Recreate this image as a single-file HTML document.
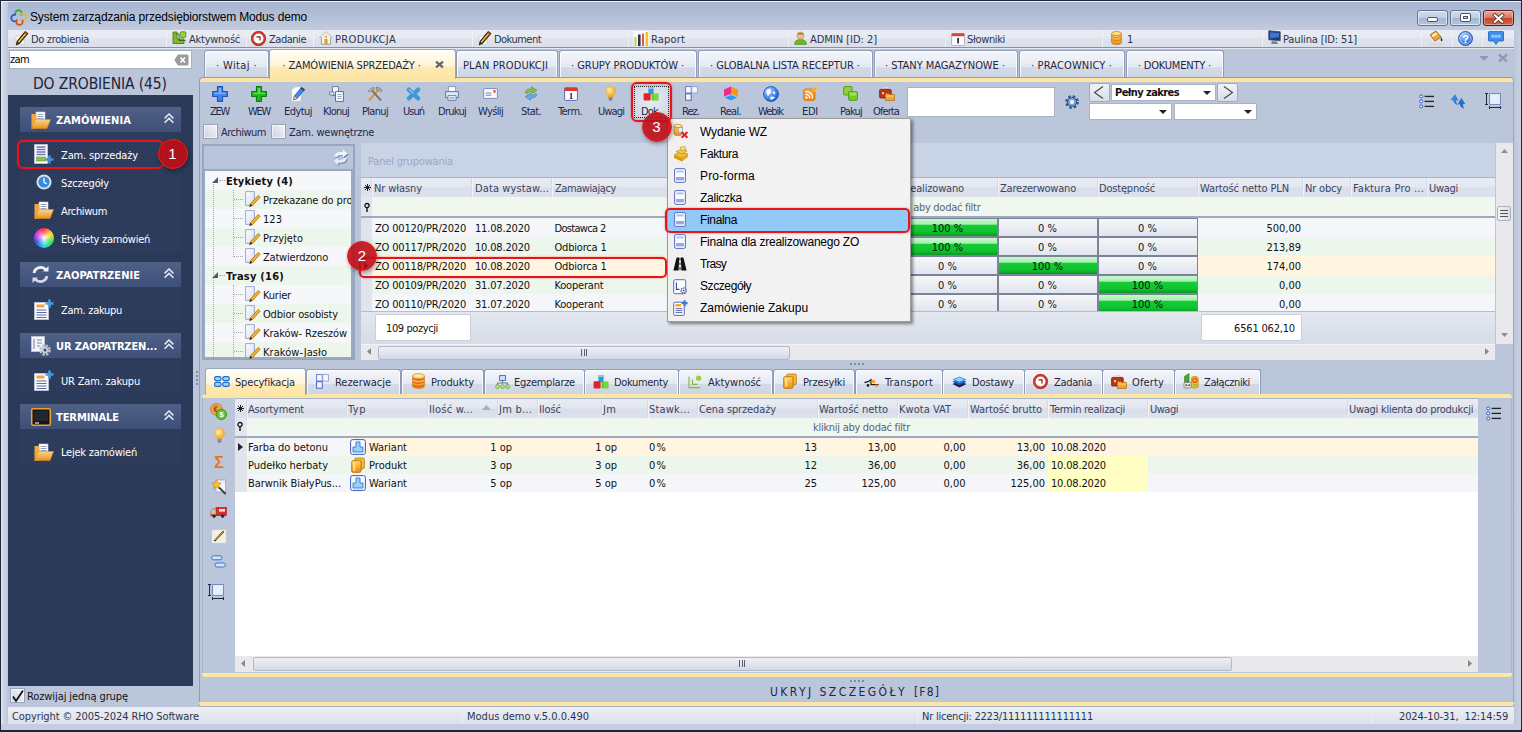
<!DOCTYPE html>
<html><head><meta charset="utf-8"><title>Modus demo</title>
<style>
*{box-sizing:border-box;margin:0;padding:0}
html,body{width:1522px;height:732px;overflow:hidden}
body{position:relative;background:#bbc6db;font-family:"DejaVu Sans Condensed","Liberation Sans",sans-serif;font-size:11px;color:#1b1b1b}
.seg{font-family:"Liberation Sans",sans-serif}
.a{position:absolute}
.t{position:absolute;white-space:nowrap;line-height:14px}
.c{text-align:center}
.r{text-align:right}
svg{position:absolute;overflow:visible}
.tab{position:absolute;top:50px;height:27px;border:1px solid #8f9cb8;border-bottom:none;border-radius:3px 3px 0 0;background:linear-gradient(#f4f6fa 0,#e4e8f1 61%,#d3dae7 64%,#cdd5e4 100%);box-shadow:inset 1px 1px 0 rgba(255,255,255,.8),inset -1px 0 0 rgba(255,255,255,.8)}
.btab{position:absolute;top:368.5px;height:25px;border:1px solid #8f9cb8;border-bottom:none;border-radius:3px 3px 0 0;background:linear-gradient(#f4f6fa 0,#e4e8f1 58%,#d3dae7 60%,#cdd5e4 100%);box-shadow:inset 1px 1px 0 rgba(255,255,255,.8),inset -1px 0 0 rgba(255,255,255,.8)}
.hd{position:absolute;background:linear-gradient(#e9ecf3 0,#e3e7f0 48%,#d9deea 52%,#dde2ec 100%)}
.sep{position:absolute;width:2px;background:linear-gradient(90deg,#d4d9e5 50%,#f1f3f7 50%)}
.pc{position:absolute;height:19px;border:1px solid #7b8398;background:linear-gradient(#f6f7fa,#e0e4ed)}
.pg{position:absolute;height:19px;border:1px solid #7b8398;background:linear-gradient(#c9f7ce 0,#a8f0b2 30%,#14cc34 38%,#0fc42e 75%,#0a9a22 100%)}
.cb{position:absolute;width:14.5px;height:14.5px;border:1px solid #9aa3b5;background:linear-gradient(45deg,#cdd2de,#f4f5f8);box-shadow:inset 0 0 0 1px rgba(255,255,255,.6)}
.combo{position:absolute;background:#fff;border:1px solid #a9b2c4}
.arr{position:absolute;width:0;height:0;border-left:4px solid transparent;border-right:4px solid transparent;border-top:4px solid #222}
.badge{position:absolute;width:30px;height:30px;border-radius:15px;background:rgba(190,14,22,.9);border:1.5px solid #f51818;box-shadow:1px 2px 4px rgba(0,0,0,.35);color:#fff;font-family:"Liberation Sans",sans-serif;font-size:15px;line-height:27px;text-align:center}
.rr{position:absolute;border:2px solid #e8141c;border-radius:5px;box-shadow:0 0 2px rgba(232,20,28,.6)}
</style></head><body>
<div class="a " style="left:0px;top:0px;width:1522px;height:732px;border:1px solid #1d2636;border-bottom:2px solid #1d2636;background:linear-gradient(#a6b4d0 0,#aebbd5 10px,#c2cce0 29px,#b7c3da 30px,#b7c3da 100%)"></div>
<div class="a " style="left:1px;top:1px;width:1520px;height:1px;background:#f2f5f9;"></div>
<div class="a " style="left:1px;top:2px;width:7px;height:722px;background:linear-gradient(90deg,#eef1f6 0,#d2d9e7 1.5px,#bdc8dc 7px)"></div>
<div class="a " style="left:1514px;top:30px;width:7px;height:694px;background:linear-gradient(90deg,#bcc7dc,#c9d1e3)"></div>
<div class="a " style="left:8px;top:48px;width:1505px;height:660px;background:#bbc6db;"></div>
<div class="t seg" style="top: 10px; font-size: 12px; color: rgb(0, 0, 0); left: 30px; letter-spacing: -0.15px;">System zarządzania przedsiębiorstwem Modus demo</div>
<div class="a " style="left:8px;top:30px;width:1506px;height:18px;background:linear-gradient(#e9ecf3 0,#e6e9f0 48%,#dde2ec 54%,#dbe0ea 100%);border-bottom:1px solid #8c8f98"></div>
<div class="a " style="left:8px;top:48px;width:1506px;height:1px;background:#e4e8f0;"></div>
<div class="a " style="left:166px;top:31px;width:1px;height:16px;background:#eef1f6;"></div>
<div class="a " style="left:246px;top:31px;width:1px;height:16px;background:#eef1f6;"></div>
<div class="a " style="left:313px;top:31px;width:1px;height:16px;background:#eef1f6;"></div>
<div class="a " style="left:472px;top:31px;width:1px;height:16px;background:#eef1f6;"></div>
<div class="a " style="left:628px;top:31px;width:1px;height:16px;background:#eef1f6;"></div>
<div class="a " style="left:788px;top:31px;width:1px;height:16px;background:#eef1f6;"></div>
<div class="a " style="left:945px;top:31px;width:1px;height:16px;background:#eef1f6;"></div>
<div class="a " style="left:1102px;top:31px;width:1px;height:16px;background:#eef1f6;"></div>
<div class="a " style="left:1262px;top:31px;width:1px;height:16px;background:#eef1f6;"></div>
<div class="a " style="left:1421px;top:31px;width:1px;height:16px;background:#eef1f6;"></div>
<div class="a " style="left:1452px;top:31px;width:1px;height:16px;background:#eef1f6;"></div>
<div class="a " style="left:1482px;top:31px;width:1px;height:16px;background:#eef1f6;"></div>
<div class="t " style="top: 32.7px; color: rgb(44, 53, 80); left: 31px; letter-spacing: -0.34px;">Do zrobienia</div>
<div class="t " style="top: 32.7px; color: rgb(44, 53, 80); left: 189px; letter-spacing: -0.25px;">Aktywność</div>
<div class="t " style="top: 32.7px; color: rgb(44, 53, 80); left: 269px; letter-spacing: -0.47px;">Zadanie</div>
<div class="t " style="top: 32.7px; color: rgb(44, 53, 80); left: 335px; letter-spacing: 0.36px;">PRODUKCJA</div>
<div class="t " style="top: 32.7px; color: rgb(44, 53, 80); left: 494px; letter-spacing: -0.53px;">Dokument</div>
<div class="t " style="top: 32.7px; color: rgb(44, 53, 80); left: 651px; letter-spacing: 0.17px;">Raport</div>
<div class="t " style="top: 32.7px; color: rgb(44, 53, 80); left: 810px; letter-spacing: -0.03px;">ADMIN [ID: 2]</div>
<div class="t " style="top: 32.7px; color: rgb(44, 53, 80); left: 967px; letter-spacing: -0.34px;">Słowniki</div>
<div class="t " style="top:32.7px;color:#2c3550;left:1127px;">1</div>
<div class="t " style="top: 32.7px; color: rgb(44, 53, 80); left: 1283px; letter-spacing: -0.13px;">Paulina [ID: 51]</div>
<div class="a " style="left:1417px;top:10px;width:31px;height:16px;border:1px solid #5f7591;border-radius:3px;background:linear-gradient(#d0dcec 0,#c0cfe4 48%,#a2b7d3 52%,#b4c6de 100%);box-shadow:inset 0 0 0 1px rgba(255,255,255,.55)"></div>
<div class="a " style="left:1450px;top:10px;width:31px;height:16px;border:1px solid #5f7591;border-radius:3px;background:linear-gradient(#d0dcec 0,#c0cfe4 48%,#a2b7d3 52%,#b4c6de 100%);box-shadow:inset 0 0 0 1px rgba(255,255,255,.55)"></div>
<div class="a " style="left:1483px;top:10px;width:31px;height:16px;border:1px solid #5a1a1c;border-radius:3px;background:linear-gradient(#eaa899 0,#dc7b66 46%,#c8432b 52%,#d4674f 100%);box-shadow:inset 0 0 0 1px rgba(255,255,255,.35)"></div>
<div class="a " style="left:1427px;top:17px;width:11px;height:5px;background:#fff;border:1px solid #4a5468;border-radius:2px"></div>
<div class="a " style="left:1460px;top:13px;width:11px;height:9px;background:#fff;border:1px solid #4a5468;border-radius:2px"></div>
<div class="a " style="left:1463px;top:16px;width:5px;height:3px;background:#c8d4e6;border:1px solid #4a5468"></div>
<svg style="left:1493px;top:13.5px" width="11" height="9" viewBox="0 0 11 9"><path d="M1.8 1.2 L9.2 7.8 M9.2 1.2 L1.8 7.8" stroke="#4a3030" stroke-width="3.6" stroke-linecap="square"></path><path d="M1.8 1.2 L9.2 7.8 M9.2 1.2 L1.8 7.8" stroke="#fff" stroke-width="2.1" stroke-linecap="square"></path></svg>
<div class="a " style="left:1px;top:724px;width:1520px;height:6px;background:#c5cee0;"></div>
<div class="a " style="left:8px;top:707px;width:1506px;height:17px;background:linear-gradient(#eceff4,#dce0ea)"></div>
<div class="t " style="top: 709.7px; color: rgb(44, 53, 80); left: 12px; letter-spacing: -0.1px;">Copyright © 2005-2024 RHO Software</div>
<div class="t " style="top: 709.7px; color: rgb(44, 53, 80); left: 467px; letter-spacing: 0px;">Modus demo v.5.0.0.490</div>
<div class="t " style="top: 709.7px; color: rgb(44, 53, 80); left: 922px; letter-spacing: -0.22px;">Nr licencji: 2223/111111111111111</div>
<div class="t " style="top: 709.7px; color: rgb(44, 53, 80); left: 1399px; white-space: pre; letter-spacing: -0.11px;">2024-10-31,  12:14:59</div>
<div class="a " style="left:1372px;top:708px;width:1px;height:16px;background:#eceff5;"></div>
<div class="a " style="left:917px;top:708px;width:1px;height:16px;background:#eceff5;"></div>
<div class="a " style="left:462px;top:708px;width:1px;height:16px;background:#eceff5;"></div>
<div class="a " style="left:8px;top:95px;width:185px;height:591px;background:#2b3a58;"></div>
<svg style="left:0;top:0" width="0" height="0"><defs><pattern id="dots" width="4" height="4" patternUnits="userSpaceOnUse"><rect width="4" height="4" fill="#2b3a58"></rect><rect x="0" y="0" width="1" height="1" fill="#394868"></rect><rect x="2" y="2" width="1" height="1" fill="#394868"></rect></pattern></defs></svg>
<svg style="left:20px;top:132px" width="161" height="120"><rect width="161" height="120" fill="url(#dots)"></rect></svg>
<svg style="left:20px;top:287px" width="161" height="36"><rect width="161" height="36" fill="url(#dots)"></rect></svg>
<svg style="left:20px;top:358px" width="161" height="36"><rect width="161" height="36" fill="url(#dots)"></rect></svg>
<svg style="left:20px;top:429px" width="161" height="36"><rect width="161" height="36" fill="url(#dots)"></rect></svg>
<div class="a " style="left:9px;top:50px;width:183px;height:19px;background:#fff;border:1px solid #a8b1c4"></div>
<div class="t " style="top: 52.7px; color: rgb(0, 0, 0); left: 10px; letter-spacing: -0.64px;">zam</div>
<svg style="left:174px;top:54px" width="15" height="12" viewBox="0 0 15 12"><path d="M4 0.5 H13 Q14.5 0.5 14.5 2 V10 Q14.5 11.5 13 11.5 H4 L0.3 6 Z" fill="#9a9a9a"></path><path d="M6.5 3.5 L11 8.5 M11 3.5 L6.5 8.5" stroke="#fff" stroke-width="1.6"></path></svg>
<div class="t " style="top: 74.1px; font-size: 15.5px; color: rgb(28, 36, 57); left: 33px; line-height: 20px; letter-spacing: -0.12px;">DO ZROBIENIA (45)</div>
<div class="a " style="left:20px;top:107px;width:161px;height:25px;background:linear-gradient(#4f6185,#3e4f79)"></div>
<div class="a " style="left:20px;top:262px;width:161px;height:25px;background:linear-gradient(#4f6185,#3e4f79)"></div>
<div class="a " style="left:20px;top:333px;width:161px;height:25px;background:linear-gradient(#4f6185,#3e4f79)"></div>
<div class="a " style="left:20px;top:404px;width:161px;height:25px;background:linear-gradient(#4f6185,#3e4f79)"></div>
<div class="t " style="top: 113.7px; color: rgb(255, 255, 255); font-weight: bold; left: 56px; letter-spacing: 0.09px;">ZAMÓWIENIA</div>
<div class="t " style="top: 268.7px; color: rgb(255, 255, 255); font-weight: bold; left: 56px; letter-spacing: 0.06px;">ZAOPATRZENIE</div>
<div class="t " style="top: 339.7px; color: rgb(255, 255, 255); font-weight: bold; left: 56px; letter-spacing: -0.14px;">UR ZAOPATRZEN...</div>
<div class="t " style="top: 410.7px; color: rgb(255, 255, 255); font-weight: bold; left: 56px; letter-spacing: -0.08px;">TERMINALE</div>
<svg style="left:163.5px;top:113px" width="10" height="11" viewBox="0 0 10 11"><path d="M0.6 5.4 L5 1 L9.4 5.4 M0.6 9.8 L5 5.4 L9.4 9.8" fill="none" stroke="#e6eaf2" stroke-width="1.5"></path></svg>
<svg style="left:163.5px;top:268px" width="10" height="11" viewBox="0 0 10 11"><path d="M0.6 5.4 L5 1 L9.4 5.4 M0.6 9.8 L5 5.4 L9.4 9.8" fill="none" stroke="#e6eaf2" stroke-width="1.5"></path></svg>
<svg style="left:163.5px;top:339px" width="10" height="11" viewBox="0 0 10 11"><path d="M0.6 5.4 L5 1 L9.4 5.4 M0.6 9.8 L5 5.4 L9.4 9.8" fill="none" stroke="#e6eaf2" stroke-width="1.5"></path></svg>
<svg style="left:163.5px;top:410px" width="10" height="11" viewBox="0 0 10 11"><path d="M0.6 5.4 L5 1 L9.4 5.4 M0.6 9.8 L5 5.4 L9.4 9.8" fill="none" stroke="#e6eaf2" stroke-width="1.5"></path></svg>
<div class="t " style="top: 148.7px; color: rgb(255, 255, 255); left: 61px; letter-spacing: -0.14px;">Zam. sprzedaży</div>
<div class="t " style="top: 176.7px; color: rgb(255, 255, 255); left: 61px; letter-spacing: -0.14px;">Szczegóły</div>
<div class="t " style="top: 204.7px; color: rgb(255, 255, 255); left: 61px; letter-spacing: -0.38px;">Archiwum</div>
<div class="t " style="top: 232.7px; color: rgb(255, 255, 255); left: 61px; letter-spacing: -0.27px;">Etykiety zamówień</div>
<div class="t " style="top: 303.7px; color: rgb(255, 255, 255); left: 61px; letter-spacing: -0.3px;">Zam. zakupu</div>
<div class="t " style="top: 374.7px; color: rgb(255, 255, 255); left: 61px; letter-spacing: -0.18px;">UR Zam. zakupu</div>
<div class="t " style="top: 445.7px; color: rgb(255, 255, 255); left: 61px; letter-spacing: -0.24px;">Lejek zamówień</div>
<div class="a " style="left:10px;top:688px;width:15px;height:15px;border:1px solid #9aa3b5;background:linear-gradient(45deg,#cdd2de,#f4f5f8);box-shadow:inset 0 0 0 1px rgba(255,255,255,.6)"></div>
<svg style="left:12px;top:689.5px" width="12" height="12" viewBox="0 0 12 12"><path d="M1 6.5 L4 11 L11 0.5" fill="none" stroke="#111" stroke-width="1.8"></path></svg>
<div class="t " style="top: 689.7px; color: rgb(17, 17, 17); left: 27px; letter-spacing: -0.09px;">Rozwijaj jedną grupę</div>
<div class="a " style="left:199px;top:77px;width:1315px;height:630px;border-radius:4px 4px 3px 3px;background:#fde5a4;border-top:1px solid #8f9cb8;border-left:1px solid #8f9cb8;border-right:1px solid #9aa7c2"></div>
<div class="a " style="left:199px;top:82px;width:1315px;height:620px;background:#bbc6db;border-left:1px solid #8f9cb8;border-right:1px solid #9aa7c2"></div>
<div class="a " style="left:199px;top:702px;width:1315px;height:4px;background:#fde5a4;border-radius:0 0 4px 4px"></div>
<div class="a " style="left:201px;top:706px;width:1311px;height:1px;background:#a5afc4;"></div>
<div class="tab" style="left:203.5px;width:65.5px"></div>
<div class="t " style="top: 58.7px; color: rgb(30, 39, 64); left: 216px; letter-spacing: 0.38px;">· Witaj ·</div>
<div class="tab" style="left:455.5px;width:102.5px"></div>
<div class="t " style="top: 58.7px; color: rgb(30, 39, 64); left: 463px; letter-spacing: 0.13px;">PLAN PRODUKCJI</div>
<div class="tab" style="left:559px;width:138px"></div>
<div class="t " style="top: 58.7px; color: rgb(30, 39, 64); left: 571px; letter-spacing: -0.05px;">· GRUPY PRODUKTÓW ·</div>
<div class="tab" style="left:698px;width:175px"></div>
<div class="t " style="top: 58.7px; color: rgb(30, 39, 64); left: 710px; letter-spacing: -0.07px;">· GLOBALNA LISTA RECEPTUR ·</div>
<div class="tab" style="left:874px;width:144px"></div>
<div class="t " style="top: 58.7px; color: rgb(30, 39, 64); left: 885px; letter-spacing: -0.05px;">· STANY MAGAZYNOWE ·</div>
<div class="tab" style="left:1019px;width:106px"></div>
<div class="t " style="top: 58.7px; color: rgb(30, 39, 64); left: 1031px; letter-spacing: 0.14px;">· PRACOWNICY ·</div>
<div class="tab" style="left:1126px;width:98px"></div>
<div class="t " style="top: 58.7px; color: rgb(30, 39, 64); left: 1138px; letter-spacing: -0.21px;">· DOKUMENTY ·</div>
<div class="a " style="left:269px;top:49px;width:186.5px;height:30px;border:1px solid #9aa6bd;border-bottom:none;border-radius:3px 3px 0 0;background:linear-gradient(#fffdf6 0,#fff4d6 55%,#fde9b4 60%,#fde5a4 100%)"></div>
<div class="t " style="top: 58.7px; color: rgb(30, 39, 64); left: 282.5px; letter-spacing: -0.1px;">· ZAMÓWIENIA SPRZEDAŻY ·</div>
<svg style="left:435px;top:61px" width="9" height="7" viewBox="0 0 9 7"><path d="M1 0.6 L8 6.4 M8 0.6 L1 6.4" stroke="#63676f" stroke-width="2.3"></path></svg>
<svg style="left:1479px;top:56px" width="10" height="5" viewBox="0 0 10 5"><path d="M0 0 H10 L5 5 Z" fill="#8f9bb5"></path></svg>
<svg style="left:1498px;top:54px" width="10" height="8" viewBox="0 0 10 8"><path d="M1 0.5 L9 7.5 M9 0.5 L1 7.5" stroke="#8f9bb5" stroke-width="2.4"></path></svg>
<div class="a " style="left:634px;top:85.5px;width:34.5px;height:32.5px;border:1px dotted #222;background:radial-gradient(ellipse at 50% 45%,#e8ebf1,#cfd5e2)"></div>
<div class="t " style="top: 104.7px; color: rgb(30, 40, 72); left: 210px; letter-spacing: -1.28px;">ZEW</div>
<div class="t " style="top: 104.7px; color: rgb(30, 40, 72); left: 248px; letter-spacing: -1.28px;">WEW</div>
<div class="t " style="top: 104.7px; color: rgb(30, 40, 72); left: 284px; letter-spacing: -0.55px;">Edytuj</div>
<div class="t " style="top: 104.7px; color: rgb(30, 40, 72); left: 323px; letter-spacing: -0.77px;">Klonuj</div>
<div class="t " style="top: 104.7px; color: rgb(30, 40, 72); left: 362px; letter-spacing: -0.68px;">Planuj</div>
<div class="t " style="top: 104.7px; color: rgb(30, 40, 72); left: 403px; letter-spacing: -0.99px;">Usuń</div>
<div class="t " style="top: 104.7px; color: rgb(30, 40, 72); left: 438px; letter-spacing: -0.73px;">Drukuj</div>
<div class="t " style="top: 104.7px; color: rgb(30, 40, 72); left: 478px; letter-spacing: -0.64px;">Wyślij</div>
<div class="t " style="top: 104.7px; color: rgb(30, 40, 72); left: 521px; letter-spacing: -0.65px;">Stat.</div>
<div class="t " style="top: 104.7px; color: rgb(30, 40, 72); left: 558px; letter-spacing: -0.58px;">Term.</div>
<div class="t " style="top: 104.7px; color: rgb(30, 40, 72); left: 598px; letter-spacing: -0.89px;">Uwagi</div>
<div class="t " style="top: 104.7px; color: rgb(30, 40, 72); left: 641px; letter-spacing: -0.89px;">Dok.</div>
<div class="t " style="top: 104.7px; color: rgb(30, 40, 72); left: 682px; letter-spacing: -0.95px;">Rez.</div>
<div class="t " style="top: 104.7px; color: rgb(30, 40, 72); left: 720px; letter-spacing: -0.69px;">Real.</div>
<div class="t " style="top: 104.7px; color: rgb(30, 40, 72); left: 758px; letter-spacing: -1px;">Webik</div>
<div class="t " style="top: 104.7px; color: rgb(30, 40, 72); left: 802px; letter-spacing: -0.27px;">EDI</div>
<div class="t " style="top: 104.7px; color: rgb(30, 40, 72); left: 840px; letter-spacing: -0.79px;">Pakuj</div>
<div class="t " style="top: 104.7px; color: rgb(30, 40, 72); left: 873px; letter-spacing: -0.9px;">Oferta</div>
<div class="a " style="left:907px;top:87px;width:148px;height:30px;background:#fff;border:1px solid #a9b2c4"></div>
<div class="a " style="left:1089px;top:83px;width:21px;height:19px;border:1px solid #a1a9ba;border-radius:2px;background:linear-gradient(#f1f3f7,#d9dde7)"></div>
<svg style="left:1093px;top:86px" width="12" height="13" viewBox="0 0 12 13"><path d="M10 0.5 L1.5 6.5 L10 12.5" fill="none" stroke="#444" stroke-width="1.1"></path></svg>
<div class="a " style="left:1217px;top:83px;width:21px;height:19px;border:1px solid #a1a9ba;border-radius:2px;background:linear-gradient(#f1f3f7,#d9dde7)"></div>
<svg style="left:1222px;top:86px" width="12" height="13" viewBox="0 0 12 13"><path d="M2 0.5 L10.5 6.5 L2 12.5" fill="none" stroke="#444" stroke-width="1.1"></path></svg>
<div class="combo" style="left:1111px;top:84px;width:105px;height:17px"></div>
<div class="t " style="top: 85.7px; color: rgb(17, 17, 17); font-weight: bold; left: 1115px; letter-spacing: -0.59px;">Pełny zakres</div>
<div class="arr" style="left:1203px;top:91px"></div>
<div class="combo" style="left:1089px;top:103px;width:83px;height:17px"></div>
<div class="arr" style="left:1159px;top:110px"></div>
<div class="combo" style="left:1174px;top:103px;width:83px;height:17px"></div>
<div class="arr" style="left:1244px;top:110px"></div>
<div class="cb" style="left:203px;top:124px"></div>
<div class="t " style="top: 125.7px; color: rgb(30, 40, 72); left: 221px; letter-spacing: -0.51px;">Archiwum</div>
<div class="cb" style="left:271px;top:124px"></div>
<div class="t " style="top: 125.7px; color: rgb(30, 40, 72); left: 289px; letter-spacing: -0.26px;">Zam. wewnętrzne</div>
<div class="a " style="left:202px;top:144px;width:153px;height:216px;background:#9ba8c1;border:1px solid #96a3bd"></div>
<div class="a " style="left:204px;top:146px;width:149px;height:23px;background:#b8c4da;"></div>
<div class="a" style="left:205px;top:171px;width:146px;height:186px;overflow:hidden;background:#f6f7fa">
<div class="a" style="left:0;top:19px;width:147px;height:19px;background:#edf6ec"></div>
<div class="a" style="left:0;top:57px;width:147px;height:19px;background:#edf6ec"></div>
<div class="a" style="left:0;top:95px;width:147px;height:19px;background:#edf6ec"></div>
<div class="a" style="left:0;top:133px;width:147px;height:19px;background:#edf6ec"></div>
<div class="a" style="left:0;top:171px;width:147px;height:19px;background:#edf6ec"></div>
</div>
<div class="a" style="left:205px;top:171px;width:146px;height:186px;overflow:hidden">
<div class="t " style="top: 3.7px; color: rgb(17, 17, 17); font-weight: bold; left: 21px; letter-spacing: 0.15px;">Etykiety (4)</div>
<svg style="left:6.5px;top:6px" width="6" height="6" viewBox="0 0 6 6"><path d="M6 0 V6 H0 Z" fill="#50586a"></path></svg>
<div class="t " style="top: 22.7px; color: rgb(17, 17, 17); left: 58px; letter-spacing: -0.1px;">Przekazane do produkcji</div>
<div class="t " style="top: 41.7px; color: rgb(17, 17, 17); left: 58px; letter-spacing: 0.04px;">123</div>
<div class="t " style="top: 60.7px; color: rgb(17, 17, 17); left: 58px; letter-spacing: 0.04px;">Przyjęto</div>
<div class="t " style="top: 79.7px; color: rgb(17, 17, 17); left: 58px; letter-spacing: -0.2px;">Zatwierdzono</div>
<div class="t " style="top: 98.7px; color: rgb(17, 17, 17); font-weight: bold; left: 21px; letter-spacing: 0.23px;">Trasy (16)</div>
<svg style="left:6.5px;top:101px" width="6" height="6" viewBox="0 0 6 6"><path d="M6 0 V6 H0 Z" fill="#50586a"></path></svg>
<div class="t " style="top: 117.7px; color: rgb(17, 17, 17); left: 58px; letter-spacing: -0.2px;">Kurier</div>
<div class="t " style="top: 136.7px; color: rgb(17, 17, 17); left: 58px; letter-spacing: -0.17px;">Odbior osobisty</div>
<div class="t " style="top: 155.7px; color: rgb(17, 17, 17); left: 58px; letter-spacing: -0.1px;">Kraków- Rzeszów</div>
<div class="t " style="top: 174.7px; color: rgb(17, 17, 17); left: 58px; letter-spacing: 0.06px;">Kraków-Jasło</div>
</div>
<div class="a " style="left:361px;top:143px;width:1134px;height:35px;background:#c9d3e6;"></div>
<div class="t " style="top: 154.7px; color: rgb(156, 167, 191); left: 368px; letter-spacing: -0.19px;">Panel grupowania</div>
<div class="a " style="left:361px;top:177px;width:1134px;height:1px;background:#aab4c8;"></div>
<div class="hd" style="left:361px;top:178px;width:1134px;height:19px"></div>
<div class="sep" style="left:371px;top:178px;height:19px"></div>
<div class="t " style="top: 181.7px; color: rgb(58, 68, 96); left: 374px; letter-spacing: -0.1px;">Nr własny</div>
<div class="sep" style="left:471px;top:178px;height:19px"></div>
<div class="t " style="top: 181.7px; color: rgb(58, 68, 96); left: 475px; letter-spacing: 0.12px;">Data wystaw...</div>
<div class="sep" style="left:551px;top:178px;height:19px"></div>
<div class="t " style="top: 181.7px; color: rgb(58, 68, 96); left: 555px; letter-spacing: -0.42px;">Zamawiający</div>
<div class="sep" style="left:897px;top:178px;height:19px"></div>
<div class="t " style="top: 181.7px; color: rgb(58, 68, 96); left: 900px; letter-spacing: -0.17px;">Zrealizowano</div>
<div class="sep" style="left:997px;top:178px;height:19px"></div>
<div class="t " style="top: 181.7px; color: rgb(58, 68, 96); left: 1000px; letter-spacing: -0.21px;">Zarezerwowano</div>
<div class="sep" style="left:1097px;top:178px;height:19px"></div>
<div class="t " style="top: 181.7px; color: rgb(58, 68, 96); left: 1099px; letter-spacing: -0.2px;">Dostępność</div>
<div class="sep" style="left:1197px;top:178px;height:19px"></div>
<div class="t " style="top: 181.7px; color: rgb(58, 68, 96); left: 1200px; letter-spacing: -0.12px;">Wartość netto PLN</div>
<div class="sep" style="left:1302px;top:178px;height:19px"></div>
<div class="t " style="top: 181.7px; color: rgb(58, 68, 96); left: 1305px; letter-spacing: -0.18px;">Nr obcy</div>
<div class="sep" style="left:1350px;top:178px;height:19px"></div>
<div class="t " style="top: 181.7px; color: rgb(58, 68, 96); left: 1353px; letter-spacing: 0.19px;">Faktura Pro ...</div>
<div class="sep" style="left:1426px;top:178px;height:19px"></div>
<div class="t " style="top: 181.7px; color: rgb(58, 68, 96); left: 1429px; letter-spacing: -0.29px;">Uwagi</div>
<svg style="left:364px;top:184px" width="7" height="7" viewBox="0 0 7 7"><path d="M3.5 0 V7 M0 3.5 H7 M1 1 L6 6 M6 1 L1 6" stroke="#222" stroke-width="1"></path></svg>
<div class="a " style="left:361px;top:197px;width:1134px;height:19px;background:#eff7ee;"></div>
<div class="a " style="left:361px;top:197px;width:11px;height:19px;background:#e3e6ee;"></div>
<svg style="left:364px;top:203px" width="6" height="9" viewBox="0 0 6 9"><circle cx="3" cy="2.6" r="2.1" fill="none" stroke="#111" stroke-width="1.3"></circle><path d="M3 4.5 V9" stroke="#111" stroke-width="1.4"></path></svg>
<div class="t " style="top: 200.7px; color: rgb(90, 99, 120); left: 782px; width: 300px; text-align: center; letter-spacing: -0.28px;">kliknij aby dodać filtr</div>
<div class="a " style="left:361px;top:216px;width:1134px;height:2px;background:#a0a9c0;"></div>
<div class="a " style="left:361px;top:218px;width:1134px;height:19px;background:#f5f6fa;"></div>
<div class="a " style="left:361px;top:218px;width:11px;height:19px;background:#e1e4ec;"></div>
<div class="t " style="top: 221.7px; color: rgb(17, 17, 17); left: 375px; letter-spacing: -0.18px;">ZO 00120/PR/2020</div>
<div class="t " style="top: 221.7px; color: rgb(17, 17, 17); left: 475px; letter-spacing: -0.17px;">11.08.2020</div>
<div class="t " style="top: 221.7px; color: rgb(17, 17, 17); left: 554.5px; letter-spacing: -0.68px;">Dostawca 2</div>
<div class="pg" style="left:898px;top:218px;width:100px;height:19px"></div>
<div class="t " style="top:221.7px;color:#111;left:797.5px;width:300px;text-align:center;">100 %</div>
<div class="pc" style="left:998px;top:218px;width:100px;height:19px"></div>
<div class="t " style="top:221.7px;color:#111;left:897.5px;width:300px;text-align:center;">0 %</div>
<div class="pc" style="left:1098px;top:218px;width:100px;height:19px"></div>
<div class="t " style="top:221.7px;color:#111;left:997.5px;width:300px;text-align:center;">0 %</div>
<div class="t " style="top:221.7px;color:#111;right:221px;">500,00</div>
<div class="a " style="left:361px;top:237px;width:1134px;height:19px;background:#edf6ec;"></div>
<div class="a " style="left:361px;top:237px;width:11px;height:19px;background:#e1e4ec;"></div>
<div class="t " style="top: 240.7px; color: rgb(17, 17, 17); left: 375px; letter-spacing: -0.18px;">ZO 00117/PR/2020</div>
<div class="t " style="top: 240.7px; color: rgb(17, 17, 17); left: 475px; letter-spacing: -0.17px;">10.08.2020</div>
<div class="t " style="top: 240.7px; color: rgb(17, 17, 17); left: 554.5px; letter-spacing: -0.19px;">Odbiorca 1</div>
<div class="pg" style="left:898px;top:237px;width:100px;height:19px"></div>
<div class="t " style="top:240.7px;color:#111;left:797.5px;width:300px;text-align:center;">100 %</div>
<div class="pc" style="left:998px;top:237px;width:100px;height:19px"></div>
<div class="t " style="top:240.7px;color:#111;left:897.5px;width:300px;text-align:center;">0 %</div>
<div class="pc" style="left:1098px;top:237px;width:100px;height:19px"></div>
<div class="t " style="top:240.7px;color:#111;left:997.5px;width:300px;text-align:center;">0 %</div>
<div class="t " style="top:240.7px;color:#111;right:221px;">213,89</div>
<div class="a " style="left:361px;top:256px;width:1134px;height:19px;background:#fff5e0;"></div>
<div class="a " style="left:361px;top:256px;width:11px;height:19px;background:#e1e4ec;"></div>
<div class="t " style="top: 259.7px; color: rgb(17, 17, 17); left: 375px; letter-spacing: -0.18px;">ZO 00118/PR/2020</div>
<div class="t " style="top: 259.7px; color: rgb(17, 17, 17); left: 475px; letter-spacing: -0.17px;">10.08.2020</div>
<div class="t " style="top: 259.7px; color: rgb(17, 17, 17); left: 554.5px; letter-spacing: -0.19px;">Odbiorca 1</div>
<div class="pc" style="left:898px;top:256px;width:100px;height:19px"></div>
<div class="t " style="top:259.7px;color:#111;left:797.5px;width:300px;text-align:center;">0 %</div>
<div class="pg" style="left:998px;top:256px;width:100px;height:19px"></div>
<div class="t " style="top:259.7px;color:#111;left:897.5px;width:300px;text-align:center;">100 %</div>
<div class="pc" style="left:1098px;top:256px;width:100px;height:19px"></div>
<div class="t " style="top:259.7px;color:#111;left:997.5px;width:300px;text-align:center;">0 %</div>
<div class="t " style="top:259.7px;color:#111;right:221px;">174,00</div>
<div class="a " style="left:361px;top:275px;width:1134px;height:19px;background:#edf6ec;"></div>
<div class="a " style="left:361px;top:275px;width:11px;height:19px;background:#e1e4ec;"></div>
<div class="t " style="top: 278.7px; color: rgb(17, 17, 17); left: 375px; letter-spacing: -0.18px;">ZO 00109/PR/2020</div>
<div class="t " style="top: 278.7px; color: rgb(17, 17, 17); left: 475px; letter-spacing: -0.17px;">31.07.2020</div>
<div class="t " style="top: 278.7px; color: rgb(17, 17, 17); left: 554.5px; letter-spacing: -0.19px;">Kooperant</div>
<div class="pc" style="left:898px;top:275px;width:100px;height:19px"></div>
<div class="t " style="top:278.7px;color:#111;left:797.5px;width:300px;text-align:center;">0 %</div>
<div class="pc" style="left:998px;top:275px;width:100px;height:19px"></div>
<div class="t " style="top:278.7px;color:#111;left:897.5px;width:300px;text-align:center;">0 %</div>
<div class="pg" style="left:1098px;top:275px;width:100px;height:19px"></div>
<div class="t " style="top:278.7px;color:#111;left:997.5px;width:300px;text-align:center;">100 %</div>
<div class="t " style="top:278.7px;color:#111;right:221px;">0,00</div>
<div class="a " style="left:361px;top:294px;width:1134px;height:19px;background:#f5f6fa;"></div>
<div class="a " style="left:361px;top:294px;width:11px;height:19px;background:#e1e4ec;"></div>
<div class="t " style="top: 297.7px; color: rgb(17, 17, 17); left: 375px; letter-spacing: -0.18px;">ZO 00110/PR/2020</div>
<div class="t " style="top: 297.7px; color: rgb(17, 17, 17); left: 475px; letter-spacing: -0.17px;">31.07.2020</div>
<div class="t " style="top: 297.7px; color: rgb(17, 17, 17); left: 554.5px; letter-spacing: -0.19px;">Kooperant</div>
<div class="pc" style="left:898px;top:294px;width:100px;height:19px"></div>
<div class="t " style="top:297.7px;color:#111;left:797.5px;width:300px;text-align:center;">0 %</div>
<div class="pc" style="left:998px;top:294px;width:100px;height:19px"></div>
<div class="t " style="top:297.7px;color:#111;left:897.5px;width:300px;text-align:center;">0 %</div>
<div class="pg" style="left:1098px;top:294px;width:100px;height:19px"></div>
<div class="t " style="top:297.7px;color:#111;left:997.5px;width:300px;text-align:center;">100 %</div>
<div class="t " style="top:297.7px;color:#111;right:221px;">0,00</div>
<svg style="left:364px;top:262px" width="5" height="8" viewBox="0 0 5 8"><path d="M0 0 L5 4 L0 8 Z" fill="#222"></path></svg>
<div class="a " style="left:361px;top:311px;width:1134px;height:33px;background:linear-gradient(#e3e7ef,#d6dce8);border-top:1px solid #b4bccd"></div>
<div class="a " style="left:375px;top:314px;width:96px;height:27px;background:#fff;border:1px solid #c9cfdb;border-radius:2px"></div>
<div class="t " style="top: 321.7px; color: rgb(17, 17, 17); left: 386px; letter-spacing: -0.4px;">109 pozycji</div>
<div class="a " style="left:1201px;top:314px;width:101px;height:27px;background:#fff;border:1px solid #c9cfdb;border-radius:2px"></div>
<div class="t " style="top: 321.7px; color: rgb(17, 17, 17); right: 227px; letter-spacing: -0.18px;">6561 062,10</div>
<div class="a " style="left:361px;top:344px;width:1134px;height:16px;background:#e9e9ec;border-top:1px solid #f3f3f5"></div>
<div class="a " style="left:378px;top:346px;width:412px;height:14px;border:1px solid #b3b9c6;border-radius:2px;background:linear-gradient(#eef0f5,#d3d9e6)"></div>
<div class="a " style="left:581.0px;top:349px;width:1px;height:7px;background:#5a5f6c;"></div>
<div class="a " style="left:583.5px;top:349px;width:1px;height:7px;background:#5a5f6c;"></div>
<div class="a " style="left:586.0px;top:349px;width:1px;height:7px;background:#5a5f6c;"></div>
<svg style="left:367px;top:348px" width="4" height="7" viewBox="0 0 4 7"><path d="M4 0 V7 L0 3.5 Z" fill="#888"></path></svg>
<svg style="left:1485px;top:348px" width="4" height="7" viewBox="0 0 4 7"><path d="M0 0 V7 L4 3.5 Z" fill="#888"></path></svg>
<div class="a " style="left:1496px;top:143px;width:17px;height:201px;background:#e9e9ec;"></div>
<svg style="left:1501px;top:149px" width="7" height="4" viewBox="0 0 7 4"><path d="M0 4 H7 L3.5 0 Z" fill="#8a8f9c"></path></svg>
<svg style="left:1501px;top:333px" width="7" height="4" viewBox="0 0 7 4"><path d="M0 0 H7 L3.5 4 Z" fill="#8a8f9c"></path></svg>
<div class="a " style="left:1497px;top:206px;width:14px;height:15px;border:1px solid #a9afbd;border-radius:2px;background:linear-gradient(90deg,#f1f3f7,#dadfe9)"></div>
<div class="a " style="left:1500px;top:210px;width:8px;height:1px;background:#555;"></div>
<div class="a " style="left:1500px;top:213px;width:8px;height:1px;background:#555;"></div>
<div class="a " style="left:1500px;top:216px;width:8px;height:1px;background:#555;"></div>
<div class="a " style="left:850px;top:363px;width:2px;height:2px;background:#7f8aa6;"></div>
<div class="a " style="left:850px;top:680px;width:2px;height:2px;background:#7f8aa6;"></div>
<div class="a " style="left:196px;top:371px;width:2px;height:2px;background:#7f8aa6;"></div>
<div class="a " style="left:854px;top:363px;width:2px;height:2px;background:#7f8aa6;"></div>
<div class="a " style="left:854px;top:680px;width:2px;height:2px;background:#7f8aa6;"></div>
<div class="a " style="left:196px;top:375px;width:2px;height:2px;background:#7f8aa6;"></div>
<div class="a " style="left:858px;top:363px;width:2px;height:2px;background:#7f8aa6;"></div>
<div class="a " style="left:858px;top:680px;width:2px;height:2px;background:#7f8aa6;"></div>
<div class="a " style="left:196px;top:379px;width:2px;height:2px;background:#7f8aa6;"></div>
<div class="a " style="left:862px;top:363px;width:2px;height:2px;background:#7f8aa6;"></div>
<div class="a " style="left:862px;top:680px;width:2px;height:2px;background:#7f8aa6;"></div>
<div class="a " style="left:196px;top:383px;width:2px;height:2px;background:#7f8aa6;"></div>
<div class="a " style="left:202px;top:394px;width:1310px;height:283px;border-radius:4px 4px 3px 3px;background:#fde5a4"></div>
<div class="a " style="left:202px;top:398px;width:1310px;height:275px;background:#bbc6db;border-left:1px solid #a9b4cb;border-right:1px solid #a9b4cb"></div>
<div class="btab" style="left:306px;width:94.5px"></div>
<div class="t " style="top: 375.7px; color: rgb(30, 39, 64); left: 335px; letter-spacing: -0.03px;">Rezerwacje</div>
<div class="btab" style="left:401px;width:82.5px"></div>
<div class="t " style="top: 375.7px; color: rgb(30, 39, 64); left: 431px; letter-spacing: -0.09px;">Produkty</div>
<div class="btab" style="left:484px;width:100.5px"></div>
<div class="t " style="top: 375.7px; color: rgb(30, 39, 64); left: 514px; letter-spacing: -0.27px;">Egzemplarze</div>
<div class="btab" style="left:584px;width:94.5px"></div>
<div class="t " style="top: 375.7px; color: rgb(30, 39, 64); left: 614px; letter-spacing: -0.34px;">Dokumenty</div>
<div class="btab" style="left:678px;width:94.5px"></div>
<div class="t " style="top: 375.7px; color: rgb(30, 39, 64); left: 708px; letter-spacing: -0.03px;">Aktywność</div>
<div class="btab" style="left:773px;width:81.5px"></div>
<div class="t " style="top: 375.7px; color: rgb(30, 39, 64); left: 803px; letter-spacing: -0.16px;">Przesyłki</div>
<div class="btab" style="left:855px;width:87.5px"></div>
<div class="t " style="top: 375.7px; color: rgb(30, 39, 64); left: 885px; letter-spacing: 0.19px;">Transport</div>
<div class="btab" style="left:942px;width:82.5px"></div>
<div class="t " style="top: 375.7px; color: rgb(30, 39, 64); left: 972px; letter-spacing: -0.1px;">Dostawy</div>
<div class="btab" style="left:1024px;width:78.5px"></div>
<div class="t " style="top: 375.7px; color: rgb(30, 39, 64); left: 1054px; letter-spacing: -0.33px;">Zadania</div>
<div class="btab" style="left:1102px;width:72.5px"></div>
<div class="t " style="top: 375.7px; color: rgb(30, 39, 64); left: 1132px; letter-spacing: 0.14px;">Oferty</div>
<div class="btab" style="left:1174px;width:86.5px"></div>
<div class="t " style="top: 375.7px; color: rgb(30, 39, 64); left: 1204px; letter-spacing: -0.39px;">Załączniki</div>
<div class="a " style="left:204.5px;top:367.5px;width:101px;height:27.5px;border:1px solid #9aa6bd;border-bottom:none;border-radius:3px 3px 0 0;background:linear-gradient(#fffefb 0,#fff4d6 55%,#fde9b4 62%,#fde5a4 100%)"></div>
<div class="t " style="top: 375.7px; color: rgb(30, 39, 64); left: 235px; letter-spacing: -0.17px;">Specyfikacja</div>
<div class="a " style="left:235px;top:398px;width:1243px;height:1px;background:#aab4c8;"></div>
<div class="hd" style="left:235px;top:399px;width:1243px;height:19px"></div>
<div class="sep" style="left:246px;top:399px;height:19px"></div>
<div class="t " style="top: 402.7px; color: rgb(58, 68, 96); left: 248px; letter-spacing: -0.17px;">Asortyment</div>
<div class="sep" style="left:346px;top:399px;height:19px"></div>
<div class="t " style="top: 402.7px; color: rgb(58, 68, 96); left: 348px; letter-spacing: 0.51px;">Typ</div>
<div class="sep" style="left:427px;top:399px;height:19px"></div>
<div class="t " style="top: 402.7px; color: rgb(58, 68, 96); left: 429px; letter-spacing: 0.2px;">Ilość w...</div>
<div class="sep" style="left:497px;top:399px;height:19px"></div>
<div class="t " style="top: 402.7px; color: rgb(58, 68, 96); left: 499px; letter-spacing: 0.23px;">Jm b...</div>
<div class="sep" style="left:537px;top:399px;height:19px"></div>
<div class="t " style="top: 402.7px; color: rgb(58, 68, 96); left: 539px; letter-spacing: -0.07px;">Ilość</div>
<div class="sep" style="left:601px;top:399px;height:19px"></div>
<div class="t " style="top: 402.7px; color: rgb(58, 68, 96); left: 603px; letter-spacing: 0.22px;">Jm</div>
<div class="sep" style="left:647px;top:399px;height:19px"></div>
<div class="t " style="top: 402.7px; color: rgb(58, 68, 96); left: 649px; letter-spacing: 0.19px;">Stawk...</div>
<div class="sep" style="left:697px;top:399px;height:19px"></div>
<div class="t " style="top: 402.7px; color: rgb(58, 68, 96); left: 699px; letter-spacing: -0.12px;">Cena sprzedaży</div>
<div class="sep" style="left:817px;top:399px;height:19px"></div>
<div class="t " style="top: 402.7px; color: rgb(58, 68, 96); left: 819px; letter-spacing: 0px;">Wartość netto</div>
<div class="sep" style="left:897px;top:399px;height:19px"></div>
<div class="t " style="top: 402.7px; color: rgb(58, 68, 96); left: 899px; letter-spacing: 0.03px;">Kwota VAT</div>
<div class="sep" style="left:967px;top:399px;height:19px"></div>
<div class="t " style="top: 402.7px; color: rgb(58, 68, 96); left: 970px; letter-spacing: -0.09px;">Wartość brutto</div>
<div class="sep" style="left:1047px;top:399px;height:19px"></div>
<div class="t " style="top: 402.7px; color: rgb(58, 68, 96); left: 1050px; letter-spacing: -0.27px;">Termin realizacji</div>
<div class="sep" style="left:1147px;top:399px;height:19px"></div>
<div class="t " style="top: 402.7px; color: rgb(58, 68, 96); left: 1150px; letter-spacing: -0.49px;">Uwagi</div>
<div class="sep" style="left:1347px;top:399px;height:19px"></div>
<div class="t " style="top: 402.7px; color: rgb(58, 68, 96); left: 1349px; letter-spacing: -0.27px;">Uwagi klienta do produkcji</div>
<svg style="left:237px;top:405px" width="7" height="7" viewBox="0 0 7 7"><path d="M3.5 0 V7 M0 3.5 H7 M1 1 L6 6 M6 1 L1 6" stroke="#222" stroke-width="1"></path></svg>
<svg style="left:482px;top:405px" width="9" height="5" viewBox="0 0 9 5"><path d="M0 5 H9 L4.5 0 Z" fill="#a4adc0"></path></svg>
<div class="a " style="left:235px;top:418px;width:1243px;height:18px;background:#eff7ee;"></div>
<div class="a " style="left:235px;top:418px;width:12px;height:18px;background:#e3e6ee;"></div>
<svg style="left:237px;top:422px" width="6" height="9" viewBox="0 0 6 9"><circle cx="3" cy="2.6" r="2.1" fill="none" stroke="#111" stroke-width="1.3"></circle><path d="M3 4.5 V9" stroke="#111" stroke-width="1.4"></path></svg>
<div class="t " style="top: 420.7px; color: rgb(90, 99, 120); left: 711.5px; width: 300px; text-align: center; letter-spacing: -0.28px;">kliknij aby dodać filtr</div>
<div class="a " style="left:235px;top:436px;width:1243px;height:2px;background:#a0a9c0;"></div>
<div class="a " style="left:235px;top:438px;width:1243px;height:218px;background:#fff;"></div>
<div class="a " style="left:235px;top:438px;width:1243px;height:18px;background:#fff5e0;"></div>
<div class="a " style="left:235px;top:438px;width:12px;height:18px;background:#e1e4ec;"></div>
<div class="a " style="left:247px;top:438px;width:100px;height:18px;background:#f5f6fa;"></div>
<div class="t " style="top: 440.7px; color: rgb(17, 17, 17); left: 248px; letter-spacing: -0.04px;">Farba do betonu</div>
<div class="t " style="top: 440.7px; color: rgb(17, 17, 17); left: 369px; letter-spacing: -0.03px;">Wariant</div>
<div class="t " style="top:440.7px;color:#111;right:1010px;">1 op</div>
<div class="t " style="top:440.7px;color:#111;right:905px;">1 op</div>
<div class="t " style="top: 440.7px; color: rgb(17, 17, 17); left: 649px; letter-spacing: 1.15px;">0%</div>
<div class="t " style="top:440.7px;color:#111;right:705px;">13</div>
<div class="t " style="top:440.7px;color:#111;right:626px;">13,00</div>
<div class="t " style="top:440.7px;color:#111;right:556.5px;">0,00</div>
<div class="t " style="top:440.7px;color:#111;right:477px;">13,00</div>
<div class="t " style="top: 440.7px; color: rgb(17, 17, 17); left: 1051px; letter-spacing: -0.17px;">10.08.2020</div>
<div class="a " style="left:235px;top:456px;width:1243px;height:18px;background:#edf6ec;"></div>
<div class="a " style="left:235px;top:456px;width:12px;height:18px;background:#e1e4ec;"></div>
<div class="a " style="left:1048px;top:456px;width:100px;height:18px;background:#ffffc4;"></div>
<div class="t " style="top: 458.7px; color: rgb(17, 17, 17); left: 248px; letter-spacing: -0.02px;">Pudełko herbaty</div>
<div class="t " style="top: 458.7px; color: rgb(17, 17, 17); left: 369px; letter-spacing: 0.02px;">Produkt</div>
<div class="t " style="top:458.7px;color:#111;right:1010px;">3 op</div>
<div class="t " style="top:458.7px;color:#111;right:905px;">3 op</div>
<div class="t " style="top: 458.7px; color: rgb(17, 17, 17); left: 649px; letter-spacing: 1.15px;">0%</div>
<div class="t " style="top:458.7px;color:#111;right:705px;">12</div>
<div class="t " style="top:458.7px;color:#111;right:626px;">36,00</div>
<div class="t " style="top:458.7px;color:#111;right:556.5px;">0,00</div>
<div class="t " style="top:458.7px;color:#111;right:477px;">36,00</div>
<div class="t " style="top: 458.7px; color: rgb(17, 17, 17); left: 1051px; letter-spacing: -0.17px;">10.08.2020</div>
<div class="a " style="left:235px;top:474px;width:1243px;height:18px;background:#f5f6fa;"></div>
<div class="a " style="left:235px;top:474px;width:12px;height:18px;background:#e1e4ec;"></div>
<div class="a " style="left:1048px;top:474px;width:100px;height:18px;background:#ffffc4;"></div>
<div class="t " style="top: 476.7px; color: rgb(17, 17, 17); left: 248px; letter-spacing: -0.04px;">Barwnik BiałyPus...</div>
<div class="t " style="top: 476.7px; color: rgb(17, 17, 17); left: 369px; letter-spacing: -0.03px;">Wariant</div>
<div class="t " style="top:476.7px;color:#111;right:1010px;">5 op</div>
<div class="t " style="top:476.7px;color:#111;right:905px;">5 op</div>
<div class="t " style="top: 476.7px; color: rgb(17, 17, 17); left: 649px; letter-spacing: 1.15px;">0%</div>
<div class="t " style="top:476.7px;color:#111;right:705px;">25</div>
<div class="t " style="top:476.7px;color:#111;right:626px;">125,00</div>
<div class="t " style="top:476.7px;color:#111;right:556.5px;">0,00</div>
<div class="t " style="top:476.7px;color:#111;right:477px;">125,00</div>
<div class="t " style="top: 476.7px; color: rgb(17, 17, 17); left: 1051px; letter-spacing: -0.17px;">10.08.2020</div>
<svg style="left:238px;top:443px" width="5" height="8" viewBox="0 0 5 8"><path d="M0 0 L5 4 L0 8 Z" fill="#222"></path></svg>
<div class="a " style="left:235px;top:656px;width:1243px;height:16px;background:#e9e9ec;"></div>
<div class="a " style="left:253px;top:657px;width:979px;height:14px;border:1px solid #b3b9c6;border-radius:2px;background:linear-gradient(#eef0f5,#d3d9e6)"></div>
<div class="a " style="left:739.0px;top:660px;width:1px;height:7px;background:#5a5f6c;"></div>
<div class="a " style="left:741.5px;top:660px;width:1px;height:7px;background:#5a5f6c;"></div>
<div class="a " style="left:744.0px;top:660px;width:1px;height:7px;background:#5a5f6c;"></div>
<svg style="left:241px;top:660px" width="4" height="7" viewBox="0 0 4 7"><path d="M4 0 V7 L0 3.5 Z" fill="#888"></path></svg>
<svg style="left:1468px;top:660px" width="4" height="7" viewBox="0 0 4 7"><path d="M0 0 V7 L4 3.5 Z" fill="#888"></path></svg>
<div class="t " style="top: 685.3px; font-size: 12px; color: rgb(30, 40, 72); left: 770px; letter-spacing: 2.44px;">UKRYJ SZCZEGÓŁY</div>
<div class="t " style="top: 685.3px; font-size: 12px; color: rgb(30, 40, 72); left: 914px; letter-spacing: 1.12px;">[F8]</div>
<svg width="0" height="0" style="left:0;top:0"><defs>
<linearGradient id="gfo" x1="0" y1="0" x2="0" y2="1"><stop offset="0" stop-color="#fcd58a"></stop><stop offset="1" stop-color="#e8931f"></stop></linearGradient>
<linearGradient id="gbl" x1="0" y1="0" x2="0" y2="1"><stop offset="0" stop-color="#8fc0f5"></stop><stop offset="1" stop-color="#2a6fd0"></stop></linearGradient>
<linearGradient id="ggr" x1="0" y1="0" x2="0" y2="1"><stop offset="0" stop-color="#7fe060"></stop><stop offset="1" stop-color="#1f9a12"></stop></linearGradient>
<linearGradient id="gor" x1="0" y1="0" x2="0" y2="1"><stop offset="0" stop-color="#ffd66a"></stop><stop offset="1" stop-color="#f08a10"></stop></linearGradient>
<linearGradient id="gpg" x1="0" y1="0" x2="1" y2="1"><stop offset="0" stop-color="#ffffff"></stop><stop offset="1" stop-color="#d5ddf0"></stop></linearGradient>
<radialGradient id="ggl" cx="0.35" cy="0.3" r="0.8"><stop offset="0" stop-color="#9fd0ff"></stop><stop offset="1" stop-color="#0c4fd0"></stop></radialGradient>
<radialGradient id="gbu" cx="0.4" cy="0.35" r="0.7"><stop offset="0" stop-color="#fff2a0"></stop><stop offset="1" stop-color="#f59a14"></stop></radialGradient>
</defs></svg>
<svg style="left:10px;top:9px" width="17" height="17" viewBox="0 0 17 17"><circle cx="8.5" cy="4.5" r="3.3" fill="none" stroke="#2fa82f" stroke-width="1.7" stroke-dasharray="14 7" transform="rotate(150 8.5 4.5)"></circle><circle cx="12.6" cy="8" r="3.3" fill="none" stroke="#f0b818" stroke-width="1.7" stroke-dasharray="14 7" transform="rotate(230 12.6 8)"></circle><circle cx="4.6" cy="9" r="3.3" fill="none" stroke="#2458c8" stroke-width="1.7" stroke-dasharray="14 7" transform="rotate(40 4.6 9)"></circle><circle cx="9.4" cy="12.6" r="3.3" fill="none" stroke="#e04a1a" stroke-width="1.7" stroke-dasharray="14 7" transform="rotate(330 9.4 12.6)"></circle></svg>
<svg style="left:15px;top:31px" width="14" height="14" viewBox="0 0 14 14"><path d="M1 5 H9 V13.5 H3 L1 11.5 Z" fill="#fafafa" stroke="#c8c8c8" stroke-width=".6"></path><path d="M10.2 0.8 L12.6 2.6 L4.4 12.2 L1.6 13.4 L2.2 10.4 Z" fill="#f2c12a" stroke="#2a2418" stroke-width="1.2"></path><path d="M10.2 0.8 L12.6 2.6 L11.6 3.8 L9.2 2 Z" fill="#d03a2a"></path><path d="M2.2 10.4 L4.4 12.2 L1.6 13.4 Z" fill="#2a2a2a"></path></svg>
<svg style="left:172px;top:31px" width="15" height="14" viewBox="0 0 15 14"><path d="M1 1 H5 V8 H12 V12.5 H1 Z" fill="#7fb832" stroke="#4f7f12" stroke-width=".9"></path><path d="M3.5 3 H7 V9.5 H13.5" fill="none" stroke="#3f6f0a" stroke-width="1"></path><rect x="8.2" y="0.8" width="5.6" height="5.6" rx="1" fill="#9bd23a" stroke="#4f7f12" stroke-width=".8"></rect></svg>
<svg style="left:251px;top:31px" width="15" height="15" viewBox="0 0 15 15"><circle cx="7.5" cy="7.5" r="6.2" fill="#fff" stroke="#d4362c" stroke-width="2.4"></circle><circle cx="7.5" cy="7.5" r="7.2" fill="none" stroke="#9a1f18" stroke-width=".5"></circle><path d="M5.5 5.8 H9 V9.5" fill="none" stroke="#7a1a14" stroke-width="1.2"></path></svg>
<svg style="left:319px;top:31px" width="14" height="14" viewBox="0 0 14 14"><path d="M7 0.8 L13.4 6.6 H11.6 V13.2 H2.4 V6.6 H0.6 Z" fill="#f6f3ea" stroke="#8a8f7a" stroke-width=".8"></path><path d="M7 0.8 L13.4 6.6 H11.6 L7 2.6 L2.4 6.6 H0.6 Z" fill="#dfe5d0"></path><rect x="5.4" y="8" width="3.2" height="5.2" fill="#f0962a"></rect><rect x="5.8" y="4.8" width="2.4" height="2" fill="#d8b070"></rect></svg>
<svg style="left:478px;top:31px" width="14" height="14" viewBox="0 0 14 14"><path d="M1 5 H9 V13.5 H3 L1 11.5 Z" fill="#fafafa" stroke="#c8c8c8" stroke-width=".6"></path><path d="M10.2 0.8 L12.6 2.6 L4.4 12.2 L1.6 13.4 L2.2 10.4 Z" fill="#f2c12a" stroke="#2a2418" stroke-width="1.2"></path><path d="M10.2 0.8 L12.6 2.6 L11.6 3.8 L9.2 2 Z" fill="#d03a2a"></path><path d="M2.2 10.4 L4.4 12.2 L1.6 13.4 Z" fill="#2a2a2a"></path></svg>
<svg style="left:634px;top:32px" width="15" height="14" viewBox="0 0 15 14"><rect x="-0.5" y="-1" width="16" height="15" fill="#fff" opacity=".75"></rect><rect x="0.5" y="5" width="2" height="9" fill="#c6d420"></rect><rect x="4" y="2.5" width="2.6" height="11.5" fill="#2a3550"></rect><rect x="8" y="1.5" width="2" height="12.5" fill="#e8505a"></rect><rect x="11.5" y="0" width="2.6" height="14" fill="#f5c518"></rect></svg>
<svg style="left:794px;top:31px" width="13" height="14" viewBox="0 0 13 14"><path d="M0.5 13.5 Q0.5 8.5 6.5 8.5 Q12.5 8.5 12.5 13.5 Z" fill="#6fb52c" stroke="#4a8a18" stroke-width=".6"></path><circle cx="6.5" cy="4.6" r="3.6" fill="#e8c08a" stroke="#b8935a" stroke-width=".6"></circle><path d="M3 4 Q6.5 -0.5 10 4 Q6.5 2.6 3 4 Z" fill="#8a6a3a"></path></svg>
<svg style="left:951px;top:32px" width="14" height="14" viewBox="0 0 14 14"><rect x="0.6" y="1.6" width="12.8" height="11.8" rx="1" fill="#fff" stroke="#a9adb8" stroke-width=".9"></rect><rect x="0.6" y="1.2" width="12.8" height="3" rx="1" fill="#d8453a"></rect><rect x="6.2" y="6" width="1.8" height="5.4" fill="#2a2f45"></rect></svg>
<svg style="left:1111px;top:31px" width="11" height="14" viewBox="0 0 11 14"><path d="M0.6 2.5 V11.5 Q0.6 13.5 5.5 13.5 Q10.4 13.5 10.4 11.5 V2.5 Z" fill="url(#gor)" stroke="#b5741a" stroke-width=".7"></path><ellipse cx="5.5" cy="2.5" rx="4.9" ry="2" fill="#ffe28a" stroke="#b5741a" stroke-width=".7"></ellipse><path d="M0.6 5.5 Q5.5 8 10.4 5.5 M0.6 8.5 Q5.5 11 10.4 8.5" fill="none" stroke="#b5741a" stroke-width=".6"></path></svg>
<svg style="left:1268px;top:30px" width="13" height="15" viewBox="0 0 13 15"><path d="M0.8 0.8 L12.2 1.8 V10.6 L0.8 9.8 Z" fill="#1e3a7a" stroke="#3a4660" stroke-width=".8"></path><path d="M2 2.2 L11 3 V7 L2 8.6 Z" fill="#3f74d0"></path><path d="M4 11 L9 11.4 L10 14 H3 Z" fill="#7a8294"></path></svg>
<svg style="left:1428px;top:30px" width="16" height="16" viewBox="0 0 16 16"><path d="M2 5 L8 1 L13 7 L7 11 Z" fill="#f3a733" stroke="#8a5a12" stroke-width=".8"></path><path d="M3.5 5.2 L8 2.4 L9.5 4 L5 7 Z" fill="#fff3c8"></path><path d="M13 7 Q15.5 10 13.5 11.5 Q12 10 13 7 Z" fill="#3a2a1a"></path><rect x="1" y="13.5" width="14" height="2" fill="#d8d8d8"></rect></svg>
<svg style="left:1458px;top:31px" width="15" height="15" viewBox="0 0 15 15"><circle cx="7.5" cy="7.5" r="7" fill="url(#ggl)" stroke="#1a3f9a" stroke-width=".8"></circle><circle cx="7.5" cy="7.5" r="5.6" fill="none" stroke="#cfe2ff" stroke-width=".8"></circle><text x="7.5" y="11.6" font-size="11" font-weight="bold" text-anchor="middle" fill="#fff" font-family="Liberation Sans,sans-serif">?</text></svg>
<svg style="left:1488px;top:31px" width="16" height="14" viewBox="0 0 16 14"><path d="M1 0.6 H15 Q15.5 0.6 15.5 1.2 V9.4 Q15.5 10 15 10 H10.5 L8 13.4 L5.5 10 H1 Q0.5 10 0.5 9.4 V1.2 Q0.5 0.6 1 0.6 Z" fill="#3f8fe8" stroke="#1f5fb8" stroke-width=".8"></path><circle cx="4.8" cy="5.3" r="1.1" fill="none" stroke="#fff" stroke-width=".7"></circle><circle cx="8" cy="5.3" r="1.1" fill="none" stroke="#fff" stroke-width=".7"></circle><circle cx="11.2" cy="5.3" r="1.1" fill="none" stroke="#fff" stroke-width=".7"></circle></svg>
<svg style="left:31px;top:111px" width="20" height="18" viewBox="0 0 20 18"><path d="M5 1 H14 V11 H5 Z" fill="#fff" stroke="#c9cfdc" stroke-width=".6"></path><path d="M6.5 3.5 H12.5 M6.5 5.5 H12.5 M6.5 7.5 H12.5" stroke="#8a94b5" stroke-width=".9"></path><path d="M0.5 3 H4.5 L5.5 5 V17.5 H0.5 Z" fill="#f2a93c"></path><path d="M0.5 17.5 L4.5 8.5 H19.5 L16 17.5 Z" fill="url(#gfo)" stroke="#d98a1c" stroke-width=".6"></path></svg>
<svg style="left:34px;top:144px" width="20" height="20" viewBox="0 0 20 20"><path d="M0.5 0.5 H13.5 V19.5 H0.5 Z" fill="#fbfbfd" stroke="#c5c9d6" stroke-width=".8"></path><path d="M2.5 3 H11.5 M2.5 5.5 H11.5 M2.5 8 H11.5 M2.5 10.5 H11.5" stroke="#6a76b8" stroke-width="1.3"></path><rect x="2.5" y="13" width="9" height="4" fill="#8bc34a" stroke="#5d9a22" stroke-width=".6"></rect><path d="M15.5 11.5 V19.5 M11.5 15.5 H19.5" stroke="#4a8fd6" stroke-width="2.6"></path></svg>
<svg style="left:36px;top:174px" width="16" height="16" viewBox="0 0 16 16"><circle cx="8" cy="8" r="7.6" fill="#d9dde3"></circle><circle cx="8" cy="8" r="5.6" fill="#2f8be6"></circle><path d="M8 4 V8.3 L10.8 10" fill="none" stroke="#fff" stroke-width="1.3"></path></svg>
<svg style="left:34px;top:201px" width="20" height="18" viewBox="0 0 20 18"><path d="M5 1 H14 V11 H5 Z" fill="#fff" stroke="#c9cfdc" stroke-width=".6"></path><path d="M6.5 3.5 H12.5 M6.5 5.5 H12.5 M6.5 7.5 H12.5" stroke="#8a94b5" stroke-width=".9"></path><path d="M0.5 3 H4.5 L5.5 5 V17.5 H0.5 Z" fill="#f2a93c"></path><path d="M0.5 17.5 L4.5 8.5 H19.5 L16 17.5 Z" fill="url(#gfo)" stroke="#d98a1c" stroke-width=".6"></path></svg>
<div class="a" style="left:34px;top:228px;width:20px;height:20px;border-radius:10px;background:radial-gradient(circle,#fff 0,rgba(255,255,255,.55) 22%,rgba(255,255,255,0) 58%),conic-gradient(#ff3b3b,#ffdf2e,#37e04a,#26d9e8,#3a55f0,#e23ae8,#ff3b3b)"></div>
<svg style="left:31px;top:265px" width="19" height="19" viewBox="0 0 19 19"><path d="M3 8 A6.8 6.8 0 0 1 15 5" fill="none" stroke="#eef1f7" stroke-width="2.8"></path><path d="M12 6.5 H17.5 V1 Z" fill="#eef1f7"></path><path d="M16 11 A6.8 6.8 0 0 1 4 14" fill="none" stroke="#d5dae6" stroke-width="2.8"></path><path d="M7 12.5 H1.5 V18 Z" fill="#d5dae6"></path></svg>
<svg style="left:34px;top:299px" width="20" height="21" viewBox="0 0 20 21"><path d="M0.5 3.5 H14.5 V20.5 H0.5 Z" fill="#fbfbfd" stroke="#c5c9d6" stroke-width=".8"></path><rect x="2.5" y="5.5" width="8" height="3" fill="#f5a535"></rect><path d="M2.5 11 H12.5 M2.5 13.5 H12.5 M2.5 16 H12.5 M2.5 18.5 H12.5" stroke="#5a68b0" stroke-width="1.2"></path><path d="M15.5 0.5 V8.5 M11.5 4.5 H19.5" stroke="#4a9ae0" stroke-width="2.6"></path></svg>
<svg style="left:31px;top:336px" width="20" height="20" viewBox="0 0 20 20"><path d="M0.5 0.5 H13.5 V15.5 H0.5 Z" fill="#f4f5f9" stroke="#c5c9d6" stroke-width=".8"></path><path d="M3 3 V13 M6 4 H11 M6 7 H11 M6 10 H9" stroke="#7a84a8" stroke-width="1.1"></path><circle cx="14" cy="14" r="4.2" fill="none" stroke="#b9bec9" stroke-width="3.2" stroke-dasharray="2.2 1.1"></circle><circle cx="14" cy="14" r="3.2" fill="#c9cdd6"></circle><circle cx="14" cy="14" r="1.5" fill="#3e4f77"></circle></svg>
<svg style="left:34px;top:370px" width="20" height="21" viewBox="0 0 20 21"><path d="M0.5 3.5 H14.5 V20.5 H0.5 Z" fill="#fbfbfd" stroke="#c5c9d6" stroke-width=".8"></path><rect x="2.5" y="5.5" width="8" height="3" fill="#f5a535"></rect><path d="M2.5 11 H12.5 M2.5 13.5 H12.5 M2.5 16 H12.5 M2.5 18.5 H12.5" stroke="#5a68b0" stroke-width="1.2"></path><path d="M15.5 0.5 V8.5 M11.5 4.5 H19.5" stroke="#4a9ae0" stroke-width="2.6"></path></svg>
<svg style="left:31px;top:408px" width="20" height="18" viewBox="0 0 20 18"><rect x="0.7" y="0.7" width="18.6" height="16.6" rx="1.5" fill="#14161c" stroke="#f0a030" stroke-width="1.6"></rect><rect x="3" y="3" width="14" height="10" fill="#22262f"></rect><path d="M4 15 H8" stroke="#e8e8e8" stroke-width="1.2"></path></svg>
<svg style="left:34px;top:443px" width="20" height="18" viewBox="0 0 20 18"><path d="M5 1 H14 V11 H5 Z" fill="#fff" stroke="#c9cfdc" stroke-width=".6"></path><path d="M6.5 3.5 H12.5 M6.5 5.5 H12.5 M6.5 7.5 H12.5" stroke="#8a94b5" stroke-width=".9"></path><path d="M0.5 3 H4.5 L5.5 5 V17.5 H0.5 Z" fill="#f2a93c"></path><path d="M0.5 17.5 L4.5 8.5 H19.5 L16 17.5 Z" fill="url(#gfo)" stroke="#d98a1c" stroke-width=".6"></path></svg>
<svg style="left:212px;top:86px" width="16" height="16" viewBox="0 0 16 16"><path d="M5.5 0.7 H10.5 V5.5 H15.3 V10.5 H10.5 V15.3 H5.5 V10.5 H0.7 V5.5 H5.5 Z" fill="#3f86e8" stroke="#1f56b8" stroke-width="1.2" stroke-linejoin="round"></path><path d="M6.8 2 H9.2 V6.8 H14 V8 H2 V6.8 H6.8 Z" fill="#a8d0ff" opacity=".55"></path></svg>
<svg style="left:251px;top:86px" width="16" height="16" viewBox="0 0 16 16"><path d="M5.5 0.7 H10.5 V5.5 H15.3 V10.5 H10.5 V15.3 H5.5 V10.5 H0.7 V5.5 H5.5 Z" fill="#1fb81f" stroke="#0c7f0c" stroke-width="1.2" stroke-linejoin="round"></path><path d="M6.8 2 H9.2 V6.8 H14 V8 H2 V6.8 H6.8 Z" fill="#9af07a" opacity=".55"></path></svg>
<svg style="left:290px;top:86px" width="16" height="16" viewBox="0 0 16 16"><path d="M1.5 4 L5 0.8 H11 V15.2 H1.5 Z" fill="#fdfdfd" stroke="#c3c6cf" stroke-width=".8"></path><path d="M11.4 1.2 L14.8 3.6 L7.2 12.4 L3.6 13.8 L4.4 10 Z" fill="#3f8ae8" stroke="#2a5aa8" stroke-width=".7"></path><path d="M11.4 1.2 L14.8 3.6 L13.6 5 L10.2 2.6 Z" fill="#3a3f4a"></path><path d="M4.4 10 L7.2 12.4 L3.6 13.8 Z" fill="#f0e0c0" stroke="#555" stroke-width=".5"></path></svg>
<svg style="left:329px;top:86px" width="16" height="16" viewBox="0 0 16 16"><path d="M3.5 0.6 H9.5 V9.5 H3.5 Z" fill="#f4f7fb" stroke="#6a7488" stroke-width=".9"></path><path d="M0.6 6 H5 V9 H0.6 Z" fill="#dbe6f5" stroke="#6a7488" stroke-width=".8"></path><path d="M6.5 5.6 H14.4 V15.4 H6.5 Z" fill="#fbfcfe" stroke="#56607a" stroke-width=".9"></path><path d="M8.4 8.5 H12.6 M8.4 10.5 H12.6 M8.4 12.5 H12.6" stroke="#7f9fc8" stroke-width=".9"></path></svg>
<svg style="left:367px;top:86px" width="16" height="16" viewBox="0 0 16 16"><path d="M2 14.5 L12 3" stroke="#e8941a" stroke-width="2.2"></path><path d="M14 14.5 L4.5 4" stroke="#7a6a5a" stroke-width="1.8"></path><path d="M9.5 1.2 Q13 1 15.2 4.6 L13 5.4 Q11.6 3.2 9.5 3.4 Z" fill="#aeb4c0" stroke="#5d6474" stroke-width=".6"></path><path d="M1 5.2 Q3 1.4 7.4 1.6 L7 3.6 Q4.4 3.4 3 6 Z" fill="#c3c8d2" stroke="#5d6474" stroke-width=".6"></path></svg>
<svg style="left:407px;top:88px" width="13" height="12" viewBox="0 0 13 12"><path d="M1.8 1.6 L11.2 10.4 M11.2 1.6 L1.8 10.4" stroke="#3f9ad8" stroke-width="4.2" stroke-linecap="round"></path><path d="M2.2 1.6 L6 5" stroke="#8fd0f5" stroke-width="1.2" stroke-linecap="round"></path></svg>
<svg style="left:445px;top:86px" width="14" height="15" viewBox="0 0 14 15"><path d="M3.4 0.6 H10.6 V6 H3.4 Z" fill="#fdfdfe" stroke="#7a86a8" stroke-width=".8"></path><path d="M0.6 5.6 H13.4 V11.6 H0.6 Z" fill="#dfe6f5" stroke="#5a6898" stroke-width=".9"></path><path d="M3 9.6 H11 V14.4 H3 Z" fill="#fff" stroke="#5a6898" stroke-width=".8"></path><path d="M4.4 11.4 H9.6 M4.4 12.8 H9.6" stroke="#5aa0d8" stroke-width=".8"></path></svg>
<svg style="left:483px;top:88px" width="15" height="11" viewBox="0 0 15 11"><rect x="0.6" y="0.6" width="13.8" height="9.8" rx=".8" fill="#fbfcff" stroke="#6f7fc0" stroke-width=".9"></rect><path d="M2.6 5 H8.4 M2.6 7.2 H8.4" stroke="#5f70b8" stroke-width=".9"></path><rect x="10.4" y="2" width="2.2" height="2.8" fill="#e8503a"></rect></svg>
<svg style="left:524px;top:86px" width="14" height="15" viewBox="0 0 14 15"><path d="M1.2 6.8 Q1.6 2.6 7.6 3 V0.8 L13 4.4 L7.6 7.6 V5.6 Q4.4 5.2 3.6 7.4 Z" fill="#7cc242" stroke="#4f9420" stroke-width=".6"></path><path d="M12.8 8.2 Q12.4 12.4 6.4 12 V14.2 L1 10.6 L6.4 7.4 V9.4 Q9.6 9.8 10.4 7.6 Z" fill="#6aa8e8" stroke="#3a78c0" stroke-width=".6"></path></svg>
<svg style="left:564px;top:87px" width="14" height="14" viewBox="0 0 14 14"><rect x="0.6" y="1" width="12.8" height="12.4" rx="1" fill="#fff" stroke="#4a5ab8" stroke-width=".9"></rect><path d="M0.6 1.8 Q0.6 0.6 1.8 0.6 H12.2 Q13.4 0.6 13.4 1.8 V4 H0.6 Z" fill="#dc3a30"></path><text x="7" y="12" font-size="9" font-weight="bold" text-anchor="middle" fill="#1a2250" font-family="Liberation Serif,serif">1</text></svg>
<svg style="left:605px;top:86px" width="11" height="15" viewBox="0 0 11 15"><path d="M5.5 0.5 Q10.5 0.5 10.5 5 Q10.5 7.4 8 9.6 V11 H3 V9.6 Q0.5 7.4 0.5 5 Q0.5 0.5 5.5 0.5 Z" fill="url(#gbu)" stroke="#e8a830" stroke-width=".5"></path><rect x="3.4" y="11" width="4.2" height="2.6" fill="#8a8f9c"></rect><rect x="4.4" y="13.4" width="2.2" height="1.2" fill="#5a5f6c"></rect></svg>
<svg style="left:643px;top:87px" width="16" height="14" viewBox="0 0 16 14"><rect x="5.4" y="0.4" width="5.2" height="6.8" fill="#2a9ad8"></rect><rect x="5.4" y="0.4" width="5.2" height="1.6" fill="#7fd0f5"></rect><rect x="0.6" y="6.2" width="7" height="7.2" rx="1" fill="#e0202a"></rect><rect x="8.6" y="6.6" width="6.8" height="6.8" fill="#5ac82a"></rect><rect x="10.4" y="6.6" width="5" height="6.8" fill="#8ae04a" opacity=".6"></rect></svg>
<svg style="left:685px;top:86px" width="13" height="15" viewBox="0 0 13 15"><rect x="0.6" y="0.6" width="5.6" height="6.4" fill="#f6f8fd" stroke="#5a74d0" stroke-width=".9"></rect><rect x="6.8" y="0.6" width="5.6" height="6.4" fill="#f6f8fd" stroke="#8a9fe0" stroke-width=".9"></rect><rect x="0.6" y="7.8" width="5.6" height="6.4" fill="#f6f8fd" stroke="#3a54c0" stroke-width=".9"></rect></svg>
<svg style="left:723px;top:86px" width="16" height="15" viewBox="0 0 16 15"><path d="M8 0.6 L1 3.6 V10.4 L8 8 Z" fill="#f02a8a"></path><path d="M8 0.6 L15 3.6 V10.4 L8 8 Z" fill="#f59a14"></path><path d="M1.6 11.4 L8 9 L14.4 11.4 L8 14.4 Z" fill="#2a9af0"></path></svg>
<svg style="left:763px;top:86px" width="16" height="16" viewBox="0 0 16 16"><circle cx="8" cy="8" r="7.5" fill="url(#ggl)" stroke="#1a4fd0" stroke-width=".8"></circle><path d="M3 5 Q5 2 8 3 Q7 5 8.5 6.5 Q6 8 5 10.5 Q3.6 8 3 5 Z M10 5 Q12.5 5.5 12.5 8 Q11 8.6 10 7 Z M7 11 Q10 10 12 11.5 Q10.5 14 7.5 13.6 Z" fill="#fff" opacity=".92"></path></svg>
<svg style="left:803px;top:86px" width="15" height="15" viewBox="0 0 15 15"><rect x="0.6" y="3" width="11.4" height="11.4" rx="2" fill="url(#gor)" stroke="#d8700c" stroke-width=".8"></rect><rect x="0.6" y="3" width="11.4" height="11.4" rx="2" fill="#f07a10" opacity=".55"></rect><circle cx="3.4" cy="11.6" r="1.2" fill="#fff"></circle><path d="M2.4 8.2 Q6.8 8.2 6.8 12.6 M2.4 5.4 Q9.6 5.4 9.6 12.6" fill="none" stroke="#fff" stroke-width="1.4"></path><circle cx="12.2" cy="2.8" r="2.3" fill="#f5a030" stroke="#fbd9a0" stroke-width=".7"></circle></svg>
<svg style="left:843px;top:86px" width="15" height="15" viewBox="0 0 15 15"><rect x="0.6" y="0.6" width="8.4" height="8.4" rx="1" fill="#8fd03a" stroke="#4f9a14" stroke-width=".9"></rect><rect x="5.6" y="5.6" width="8.8" height="8.8" rx="1" fill="#7cc62a" stroke="#4f9a14" stroke-width=".9"></rect><rect x="6.6" y="6.6" width="6.8" height="3" fill="#b8e87a" opacity=".7"></rect></svg>
<svg style="left:879px;top:87px" width="16" height="14" viewBox="0 0 16 14"><path d="M4.4 2.4 V1.2 Q4.4 0.5 5.2 0.5 H8.2 Q9 0.5 9 1.2 V2.4" fill="none" stroke="#d8d8d8" stroke-width="1"></path><rect x="0.6" y="2.4" width="11.6" height="8.6" rx="1" fill="#b8341a" stroke="#7a1c0c" stroke-width=".8"></rect><rect x="3" y="5.2" width="2" height="2" fill="#f5d9a0"></rect><path d="M6.4 6.4 H10 L10.8 7.6 H15.4 V13.4 H6.4 Z" fill="#f5a82a" stroke="#b86a0c" stroke-width=".8"></path><path d="M6.8 9 H15" stroke="#fbd98a" stroke-width="1"></path></svg>
<svg style="left:1064px;top:94px" width="16" height="16" viewBox="0 0 16 16"><circle cx="8" cy="8" r="5.6" fill="none" stroke="#2a5a9a" stroke-width="2.6" stroke-dasharray="2.4 2"></circle><circle cx="8" cy="8" r="4.4" fill="none" stroke="#2a5a9a" stroke-width="1.4"></circle><circle cx="8" cy="8" r="2.8" fill="#e8eef8" stroke="#2a5a9a" stroke-width=".6"></circle></svg>
<svg style="left:1419px;top:94px" width="15" height="15" viewBox="0 0 15 15"><circle cx="2.2" cy="2.4" r="1.5" fill="#fff" stroke="#2a5ac8" stroke-width="1"></circle><path d="M5.6 2.4 H15" stroke="#222" stroke-width="1.3"></path><circle cx="2.2" cy="7.4" r="1.5" fill="#fff" stroke="#2a5ac8" stroke-width="1"></circle><path d="M5.6 7.4 H15" stroke="#222" stroke-width="1.3"></path><circle cx="2.2" cy="12.4" r="1.5" fill="#fff" stroke="#2a5ac8" stroke-width="1"></circle><path d="M5.6 12.4 H15" stroke="#222" stroke-width="1.3"></path></svg>
<svg style="left:1450px;top:94px" width="16" height="15" viewBox="0 0 16 15"><path d="M1 6 L5 0.8 L8.2 6.4 L6 5.6 Q5.4 8 7 10.6 Q3.4 9.4 3.4 5.4 Z" fill="#2a8ae8" stroke="#1a5ab8" stroke-width=".4"></path><path d="M15 8.4 L11.4 14.4 L7.8 8.8 L10 9.4 Q10.6 7 9 4.4 Q12.8 5.6 12.8 9.2 Z" fill="#1f6fd8" stroke="#1a4fa8" stroke-width=".4" transform="rotate(180 11.4 9.4)"></path></svg>
<svg style="left:1485px;top:93px" width="16" height="17" viewBox="0 0 16 17"><path d="M1.5 0 V12 M0 0.5 H3 M0 11.5 H3" stroke="#1a2a4a" stroke-width="1"></path><rect x="4.6" y="0.6" width="10.8" height="10.8" fill="#e8eefb" stroke="#6a7fb8" stroke-width=".9"></rect><path d="M4 14.5 H16 M4.5 13 V16 M15.5 13 V16" stroke="#1a2a4a" stroke-width="1"></path></svg>
<svg style="left:333px;top:150px" width="15" height="15" viewBox="0 0 15 15"><g transform="translate(-1.2,-1.4) scale(1.17)"><g transform="translate(.7,.8)"><path d="M2.2 7 Q2.6 2.8 7.4 2.8 H9.4 V0.6 L13.6 4.2 L9.4 7.6 V5.4 H7.4 Q5 5.4 4.8 7 Z" fill="#6e7fae"></path><path d="M12.8 8 Q12.4 12.2 7.6 12.2 H5.6 V14.4 L1.4 10.8 L5.6 7.4 V9.6 H7.6 Q10 9.6 10.2 8 Z" fill="#6e7fae"></path></g><path d="M2.2 7 Q2.6 2.8 7.4 2.8 H9.4 V0.6 L13.6 4.2 L9.4 7.6 V5.4 H7.4 Q5 5.4 4.8 7 Z" fill="#f1f4fa"></path><path d="M12.8 8 Q12.4 12.2 7.6 12.2 H5.6 V14.4 L1.4 10.8 L5.6 7.4 V9.6 H7.6 Q10 9.6 10.2 8 Z" fill="#e6ebf5"></path></g></svg>
<svg style="left:244px;top:191px" width="17" height="17" viewBox="0 0 17 17"><path d="M1.6 0.6 H10.4 V12.4 L8.4 14.4 H1.6 Z" fill="url(#gpg)" stroke="#8a94c8" stroke-width=".8"></path><path d="M14.2 4.4 L16.2 6.2 L8.4 14.6 L5.6 15.8 L6.4 12.8 Z" fill="#f5b02a" stroke="#a86a0c" stroke-width=".7"></path><path d="M6.4 12.8 L8.4 14.6 L5.6 15.8 Z" fill="#2a2a2a"></path></svg>
<svg style="left:244px;top:210px" width="17" height="17" viewBox="0 0 17 17"><path d="M1.6 0.6 H10.4 V12.4 L8.4 14.4 H1.6 Z" fill="url(#gpg)" stroke="#8a94c8" stroke-width=".8"></path><path d="M14.2 4.4 L16.2 6.2 L8.4 14.6 L5.6 15.8 L6.4 12.8 Z" fill="#f5b02a" stroke="#a86a0c" stroke-width=".7"></path><path d="M6.4 12.8 L8.4 14.6 L5.6 15.8 Z" fill="#2a2a2a"></path></svg>
<svg style="left:244px;top:229px" width="17" height="17" viewBox="0 0 17 17"><path d="M1.6 0.6 H10.4 V12.4 L8.4 14.4 H1.6 Z" fill="url(#gpg)" stroke="#8a94c8" stroke-width=".8"></path><path d="M14.2 4.4 L16.2 6.2 L8.4 14.6 L5.6 15.8 L6.4 12.8 Z" fill="#f5b02a" stroke="#a86a0c" stroke-width=".7"></path><path d="M6.4 12.8 L8.4 14.6 L5.6 15.8 Z" fill="#2a2a2a"></path></svg>
<svg style="left:244px;top:248px" width="17" height="17" viewBox="0 0 17 17"><path d="M1.6 0.6 H10.4 V12.4 L8.4 14.4 H1.6 Z" fill="url(#gpg)" stroke="#8a94c8" stroke-width=".8"></path><path d="M14.2 4.4 L16.2 6.2 L8.4 14.6 L5.6 15.8 L6.4 12.8 Z" fill="#f5b02a" stroke="#a86a0c" stroke-width=".7"></path><path d="M6.4 12.8 L8.4 14.6 L5.6 15.8 Z" fill="#2a2a2a"></path></svg>
<svg style="left:244px;top:286px" width="17" height="17" viewBox="0 0 17 17"><path d="M1.6 0.6 H10.4 V12.4 L8.4 14.4 H1.6 Z" fill="url(#gpg)" stroke="#8a94c8" stroke-width=".8"></path><path d="M14.2 4.4 L16.2 6.2 L8.4 14.6 L5.6 15.8 L6.4 12.8 Z" fill="#f5b02a" stroke="#a86a0c" stroke-width=".7"></path><path d="M6.4 12.8 L8.4 14.6 L5.6 15.8 Z" fill="#2a2a2a"></path></svg>
<svg style="left:244px;top:305px" width="17" height="17" viewBox="0 0 17 17"><path d="M1.6 0.6 H10.4 V12.4 L8.4 14.4 H1.6 Z" fill="url(#gpg)" stroke="#8a94c8" stroke-width=".8"></path><path d="M14.2 4.4 L16.2 6.2 L8.4 14.6 L5.6 15.8 L6.4 12.8 Z" fill="#f5b02a" stroke="#a86a0c" stroke-width=".7"></path><path d="M6.4 12.8 L8.4 14.6 L5.6 15.8 Z" fill="#2a2a2a"></path></svg>
<svg style="left:244px;top:324px" width="17" height="17" viewBox="0 0 17 17"><path d="M1.6 0.6 H10.4 V12.4 L8.4 14.4 H1.6 Z" fill="url(#gpg)" stroke="#8a94c8" stroke-width=".8"></path><path d="M14.2 4.4 L16.2 6.2 L8.4 14.6 L5.6 15.8 L6.4 12.8 Z" fill="#f5b02a" stroke="#a86a0c" stroke-width=".7"></path><path d="M6.4 12.8 L8.4 14.6 L5.6 15.8 Z" fill="#2a2a2a"></path></svg>
<svg style="left:244px;top:343px" width="17" height="17" viewBox="0 0 17 17"><path d="M1.6 0.6 H10.4 V12.4 L8.4 14.4 H1.6 Z" fill="url(#gpg)" stroke="#8a94c8" stroke-width=".8"></path><path d="M14.2 4.4 L16.2 6.2 L8.4 14.6 L5.6 15.8 L6.4 12.8 Z" fill="#f5b02a" stroke="#a86a0c" stroke-width=".7"></path><path d="M6.4 12.8 L8.4 14.6 L5.6 15.8 Z" fill="#2a2a2a"></path></svg>
<div class="a" style="left:213px;top:184px;width:0;height:173px;border-left:1px dotted #a8a8a8"></div>
<div class="a" style="left:233px;top:190px;width:0;height:67px;border-left:1px dotted #a8a8a8"></div>
<div class="a" style="left:233px;top:285px;width:0;height:72px;border-left:1px dotted #a8a8a8"></div>
<div class="a" style="left:234px;top:199px;width:9px;height:0;border-top:1px dotted #a8a8a8"></div>
<div class="a" style="left:234px;top:218px;width:9px;height:0;border-top:1px dotted #a8a8a8"></div>
<div class="a" style="left:234px;top:237px;width:9px;height:0;border-top:1px dotted #a8a8a8"></div>
<div class="a" style="left:234px;top:256px;width:9px;height:0;border-top:1px dotted #a8a8a8"></div>
<div class="a" style="left:234px;top:294px;width:9px;height:0;border-top:1px dotted #a8a8a8"></div>
<div class="a" style="left:234px;top:313px;width:9px;height:0;border-top:1px dotted #a8a8a8"></div>
<div class="a" style="left:234px;top:332px;width:9px;height:0;border-top:1px dotted #a8a8a8"></div>
<div class="a" style="left:234px;top:351px;width:9px;height:0;border-top:1px dotted #a8a8a8"></div>
<div class="a" style="left:219px;top:180px;width:6px;height:0;border-top:1px dotted #a8a8a8"></div>
<div class="a" style="left:219px;top:275px;width:6px;height:0;border-top:1px dotted #a8a8a8"></div>
<svg style="left:214px;top:376px" width="16" height="11" viewBox="0 0 16 11"><rect x="0.6" y="0.6" width="6.4" height="4" rx="1.6" fill="#a8d2f8" stroke="#1f6fd0" stroke-width="1.2"></rect><rect x="0.6" y="6.4" width="6.4" height="4" rx="1.6" fill="#a8d2f8" stroke="#1f6fd0" stroke-width="1.2"></rect><rect x="8.8" y="0.6" width="6.4" height="4" rx="1.6" fill="#a8d2f8" stroke="#1f6fd0" stroke-width="1.2"></rect><rect x="8.8" y="6.4" width="6.4" height="4" rx="1.6" fill="#a8d2f8" stroke="#1f6fd0" stroke-width="1.2"></rect></svg>
<svg style="left:316px;top:374px" width="13" height="15" viewBox="0 0 13 15"><rect x="0.6" y="0.6" width="5.6" height="6.4" fill="#f6f8fd" stroke="#5a74d0" stroke-width=".9"></rect><rect x="6.8" y="0.6" width="5.6" height="6.4" fill="#f6f8fd" stroke="#8a9fe0" stroke-width=".9"></rect><rect x="0.6" y="7.8" width="5.6" height="6.4" fill="#f6f8fd" stroke="#3a54c0" stroke-width=".9"></rect></svg>
<svg style="left:412px;top:373px" width="13" height="16" viewBox="0 0 13 16"><path d="M0.6 3 V13 Q0.6 15.4 6.5 15.4 Q12.4 15.4 12.4 13 V3 Z" fill="url(#gor)" stroke="#c8801a" stroke-width=".7"></path><ellipse cx="6.5" cy="3" rx="5.9" ry="2.4" fill="#ffe9a0" stroke="#c8801a" stroke-width=".7"></ellipse><path d="M0.6 5.6 Q6.5 8.4 12.4 5.6 M0.6 9 Q6.5 11.8 12.4 9 M0.6 12.2 Q6.5 15 12.4 12.2" fill="none" stroke="#e0581a" stroke-width="1.3"></path></svg>
<svg style="left:494.5px;top:375px" width="15" height="14" viewBox="0 0 15 14"><rect x="4.6" y="0.6" width="5.8" height="4.8" fill="#cfe2fb" stroke="#2a6ac8" stroke-width=".9"></rect><path d="M7.5 5.4 V8 M2.4 10 V8 H12.6 V10" fill="none" stroke="#555" stroke-width=".8"></path><circle cx="2.4" cy="11.6" r="1.8" fill="#c8f08a" stroke="#4f9a14" stroke-width=".8"></circle><circle cx="7.5" cy="11.6" r="1.8" fill="#c8f08a" stroke="#4f9a14" stroke-width=".8"></circle><circle cx="12.6" cy="11.6" r="1.8" fill="#c8f08a" stroke="#4f9a14" stroke-width=".8"></circle></svg>
<svg style="left:593px;top:375px" width="16" height="14" viewBox="0 0 16 14"><rect x="5.4" y="0.4" width="5.2" height="6.8" fill="#2a9ad8"></rect><rect x="5.4" y="0.4" width="5.2" height="1.6" fill="#7fd0f5"></rect><rect x="0.6" y="6.2" width="7" height="7.2" rx="1" fill="#e0202a"></rect><rect x="8.6" y="6.6" width="6.8" height="6.8" fill="#5ac82a"></rect><rect x="10.4" y="6.6" width="5" height="6.8" fill="#8ae04a" opacity=".6"></rect></svg>
<svg style="left:688px;top:375px" width="14" height="14" viewBox="0 0 14 14"><path d="M1 1.6 V12.6 H12" fill="none" stroke="#7fb832" stroke-width="1.1"></path><path d="M4.4 4.6 V9.4 H9.4" fill="none" stroke="#7fb832" stroke-width="1.1"></path><circle cx="10.6" cy="3.2" r="2.6" fill="#9bd23a"></circle></svg>
<svg style="left:783px;top:373px" width="14" height="16" viewBox="0 0 14 16"><path d="M4.4 1 H12 Q13.4 1 13.4 2.4 V11 L10 12.4 V4 H3 Z" fill="#f8b838" stroke="#b8700c" stroke-width=".7"></path><rect x="0.6" y="3.6" width="9.4" height="11.8" rx="1.6" fill="url(#gor)" stroke="#b8700c" stroke-width=".8"></rect><rect x="2" y="5" width="2.4" height="9" fill="#ffe9a0" opacity=".7"></rect></svg>
<svg style="left:864px;top:379px" width="15" height="8" viewBox="0 0 15 8"><path d="M0.5 3.6 L4.6 2.4 L7 0.6 V6" fill="none" stroke="#1a1a1a" stroke-width="1.2"></path><rect x="7.6" y="1" width="3.4" height="3" fill="#f5a020"></rect><path d="M7 5.6 H14.6" stroke="#1a1a1a" stroke-width="1.2"></path><circle cx="4" cy="6.4" r="1.3" fill="#1a1a1a"></circle><circle cx="12.6" cy="6.6" r="1.3" fill="#f08a10"></circle></svg>
<svg style="left:952px;top:376px" width="15" height="12" viewBox="0 0 15 12"><path d="M7.5 5 L14.6 8 L7.5 11.4 L0.4 8 Z" fill="#14224a"></path><path d="M7.5 2.8 L14.6 5.8 L7.5 9.2 L0.4 5.8 Z" fill="#1a5ab8"></path><path d="M7.5 0.6 L14.6 3.6 L7.5 7 L0.4 3.6 Z" fill="#3f9ae8"></path><path d="M7.5 1.4 L12 3.4 L7.5 5.4 L3 3.4 Z" fill="#9ad0fb"></path></svg>
<svg style="left:1033px;top:374px" width="15" height="15" viewBox="0 0 15 15"><circle cx="7.5" cy="7.5" r="6.2" fill="#fff" stroke="#d4362c" stroke-width="2.4"></circle><circle cx="7.5" cy="7.5" r="7.2" fill="none" stroke="#9a1f18" stroke-width=".5"></circle><path d="M5.5 5.8 H9 V9.5" fill="none" stroke="#7a1a14" stroke-width="1.2"></path></svg>
<svg style="left:1111px;top:375px" width="16" height="14" viewBox="0 0 16 14"><path d="M4.4 2.4 V1.2 Q4.4 0.5 5.2 0.5 H8.2 Q9 0.5 9 1.2 V2.4" fill="none" stroke="#d8d8d8" stroke-width="1"></path><rect x="0.6" y="2.4" width="11.6" height="8.6" rx="1" fill="#b8341a" stroke="#7a1c0c" stroke-width=".8"></rect><rect x="3" y="5.2" width="2" height="2" fill="#f5d9a0"></rect><path d="M6.4 6.4 H10 L10.8 7.6 H15.4 V13.4 H6.4 Z" fill="#f5a82a" stroke="#b86a0c" stroke-width=".8"></path><path d="M6.8 9 H15" stroke="#fbd98a" stroke-width="1"></path></svg>
<svg style="left:1183px;top:373px" width="16" height="16" viewBox="0 0 16 16"><path d="M1.6 9 V3.4 L6 0.6 V9 Z" fill="#3fae2a" stroke="#1f6a14" stroke-width=".6"></path><rect x="1" y="9.4" width="7.4" height="5.6" rx="1" fill="#e8e8e0" stroke="#6a6a5a" stroke-width=".7"></rect><circle cx="3.4" cy="12.2" r="1" fill="#555"></circle><circle cx="6.2" cy="12.2" r="1" fill="#555"></circle><rect x="8.4" y="3.6" width="6.8" height="11.4" rx="2" fill="#f5c02a" stroke="#b8800c" stroke-width=".7"></rect><circle cx="11.8" cy="7.4" r="2" fill="none" stroke="#d8501a" stroke-width="1.1"></circle><rect x="9.8" y="11" width="4" height="2.4" fill="#8fc83a"></rect></svg>
<svg style="left:210px;top:403px" width="17" height="17" viewBox="0 0 17 17"><circle cx="6.4" cy="6.4" r="5.8" fill="#f5a54a" stroke="#c8701a" stroke-width=".8"></circle><text x="5.6" y="9.4" font-size="8.5" font-weight="bold" text-anchor="middle" fill="#8a4a0c" font-family="Liberation Sans,sans-serif">€</text><circle cx="11.4" cy="11.4" r="5.2" fill="#5ac82a" stroke="#2a8a0c" stroke-width=".8"></circle><text x="11.4" y="14.4" font-size="8" font-weight="bold" text-anchor="middle" fill="#fff" font-family="Liberation Sans,sans-serif">$</text></svg>
<svg style="left:214px;top:428px" width="11" height="15" viewBox="0 0 11 15"><path d="M5.5 0.5 Q10.5 0.5 10.5 5 Q10.5 7.4 8 9.6 V11 H3 V9.6 Q0.5 7.4 0.5 5 Q0.5 0.5 5.5 0.5 Z" fill="url(#gbu)" stroke="#e8a830" stroke-width=".5"></path><rect x="3.4" y="11" width="4.2" height="2.6" fill="#8a8f9c"></rect><rect x="4.4" y="13.4" width="2.2" height="1.2" fill="#5a5f6c"></rect></svg>
<svg style="left:213px;top:455px" width="12" height="13" viewBox="0 0 12 13"><text x="6" y="12.6" font-size="16" font-weight="bold" text-anchor="middle" fill="#e8741a" font-family="Liberation Sans,sans-serif">Σ</text></svg>
<svg style="left:211px;top:479px" width="16" height="16" viewBox="0 0 16 16"><rect x="5" y="1" width="9.6" height="12" fill="#f2f4fa" stroke="#9aa6c8" stroke-width=".8"></rect><path d="M5.4 0.6 L6.8 3.8 L10.2 4.2 L7.6 6.4 L8.4 9.8 L5.4 8 L2.4 9.8 L3.2 6.4 L0.6 4.2 L4 3.8 Z" fill="#f8c02a" stroke="#c8801a" stroke-width=".6"></path><path d="M8 8.4 L14.6 15" stroke="#3a3a3a" stroke-width="1.8"></path></svg>
<svg style="left:210px;top:507px" width="17" height="11" viewBox="0 0 17 11"><rect x="6" y="0.6" width="10.4" height="7.4" fill="#e8262a" stroke="#a8141a" stroke-width=".6"></rect><rect x="9" y="2" width="6" height="2.6" fill="#fff" opacity=".85"></rect><path d="M0.8 8 V4.2 L2.6 1.8 H6 V8 Z" fill="#f5b08a" stroke="#a8602a" stroke-width=".6"></path><rect x="1.6" y="3" width="3" height="2.2" fill="#9ad0f5"></rect><rect x="0.4" y="7.6" width="16" height="1.4" fill="#5a5a5a"></rect><circle cx="4" cy="9.2" r="1.6" fill="#2a2a2a"></circle><circle cx="12.6" cy="9.2" r="1.6" fill="#2a2a2a"></circle></svg>
<svg style="left:211px;top:529px" width="16" height="15" viewBox="0 0 16 15"><rect x="0.6" y="0.6" width="14.8" height="13.8" rx="1" fill="#f1efe9" stroke="#c8c4b8" stroke-width=".8"></rect><path d="M3.4 12 L12.6 2.4" stroke="#2a2a2a" stroke-width="1.8"></path><path d="M4.2 11 L12 3" stroke="#f2c12a" stroke-width=".9"></path></svg>
<svg style="left:211px;top:555px" width="15" height="13" viewBox="0 0 15 13"><rect x="0.6" y="0.8" width="10.4" height="4" rx="2" fill="#cfe6fb" stroke="#2a7ad8" stroke-width="1"></rect><rect x="4" y="8" width="10.4" height="4" rx="2" fill="#cfe6fb" stroke="#2a7ad8" stroke-width="1"></rect></svg>
<svg style="left:208px;top:584px" width="16" height="17" viewBox="0 0 16 17"><path d="M1.5 0 V12 M0 0.5 H3 M0 11.5 H3" stroke="#1a2a4a" stroke-width="1"></path><rect x="4.6" y="0.6" width="10.8" height="10.8" fill="#e8eefb" stroke="#6a7fb8" stroke-width=".9"></rect><path d="M4 14.5 H16 M4.5 13 V16 M15.5 13 V16" stroke="#1a2a4a" stroke-width="1"></path></svg>
<svg style="left:1486px;top:406px" width="15" height="15" viewBox="0 0 15 15"><circle cx="2.2" cy="2.4" r="1.5" fill="#fff" stroke="#2a5ac8" stroke-width="1"></circle><path d="M5.6 2.4 H15" stroke="#222" stroke-width="1.3"></path><circle cx="2.2" cy="7.4" r="1.5" fill="#fff" stroke="#2a5ac8" stroke-width="1"></circle><path d="M5.6 7.4 H15" stroke="#222" stroke-width="1.3"></path><circle cx="2.2" cy="12.4" r="1.5" fill="#fff" stroke="#2a5ac8" stroke-width="1"></circle><path d="M5.6 12.4 H15" stroke="#222" stroke-width="1.3"></path></svg>
<svg style="left:350px;top:439px" width="16" height="16" viewBox="0 0 16 16"><rect x="0.6" y="0.6" width="14.8" height="14.8" rx="2" fill="#f4f8ff" stroke="#3a5ac8" stroke-width="1"></rect><path d="M6 3 H10 V8 H13 V13 H3 V8 H6 Z" fill="#9ad0f5" stroke="#2a7ad8" stroke-width=".9"></path></svg>
<svg style="left:351px;top:457px" width="14" height="16" viewBox="0 0 14 16"><path d="M4.4 1 H12 Q13.4 1 13.4 2.4 V11 L10 12.4 V4 H3 Z" fill="#f8b838" stroke="#b8700c" stroke-width=".7"></path><rect x="0.6" y="3.6" width="9.4" height="11.8" rx="1.6" fill="url(#gor)" stroke="#b8700c" stroke-width=".8"></rect><rect x="2" y="5" width="2.4" height="9" fill="#ffe9a0" opacity=".7"></rect></svg>
<svg style="left:350px;top:475px" width="16" height="16" viewBox="0 0 16 16"><rect x="0.6" y="0.6" width="14.8" height="14.8" rx="2" fill="#f4f8ff" stroke="#3a5ac8" stroke-width="1"></rect><path d="M6 3 H10 V8 H13 V13 H3 V8 H6 Z" fill="#9ad0f5" stroke="#2a7ad8" stroke-width=".9"></path></svg>
<div class="a " style="left:666.5px;top:118px;width:244px;height:204px;background:#f2f2f2;border:1px solid #9d9d9d;box-shadow:2px 2px 3px rgba(0,0,0,.45)"></div>
<div class="a " style="left:668px;top:119px;width:29px;height:202px;background:#f0f0f0;"></div>
<div class="a " style="left:668px;top:209px;width:241px;height:22px;background:#91c9f7;"></div>
<div class="t seg" style="top: 125px; font-size: 12px; color: rgb(0, 0, 0); left: 700px; letter-spacing: -0.16px;">Wydanie WZ</div>
<div class="t seg" style="top: 147px; font-size: 12px; color: rgb(0, 0, 0); left: 700px; letter-spacing: -0.38px;">Faktura</div>
<div class="t seg" style="top: 169px; font-size: 12px; color: rgb(0, 0, 0); left: 700px; letter-spacing: 0.18px;">Pro-forma</div>
<div class="t seg" style="top: 191px; font-size: 12px; color: rgb(0, 0, 0); left: 700px; letter-spacing: -0.25px;">Zaliczka</div>
<div class="t seg" style="top: 213px; font-size: 12px; color: rgb(0, 0, 0); left: 700px; letter-spacing: -0.34px;">Finalna</div>
<div class="t seg" style="top: 235px; font-size: 12px; color: rgb(0, 0, 0); left: 700px; letter-spacing: -0.22px;">Finalna dla zrealizowanego ZO</div>
<div class="t seg" style="top: 257px; font-size: 12px; color: rgb(0, 0, 0); left: 700px; letter-spacing: -0.71px;">Trasy</div>
<div class="t seg" style="top: 279px; font-size: 12px; color: rgb(0, 0, 0); left: 700px; letter-spacing: -0.41px;">Szczegóły</div>
<div class="t seg" style="top: 301px; font-size: 12px; color: rgb(0, 0, 0); left: 700px; letter-spacing: 0px;">Zamówienie Zakupu</div>
<svg style="left:673px;top:123px" width="16" height="16" viewBox="0 0 16 16"><path d="M1 3 V11 Q1 12.6 5 12.6 Q9 12.6 9 11 V3 Z" fill="url(#gor)" stroke="#b8801a" stroke-width=".7"></path><ellipse cx="5" cy="3" rx="4" ry="1.7" fill="#ffe9a0" stroke="#b8801a" stroke-width=".7"></ellipse><rect x="5.6" y="4.6" width="4" height="5" fill="#e8e8f0" stroke="#8a8aa0" stroke-width=".5"></rect><path d="M8.6 9 L14.4 14.8 M14.4 9 L8.6 14.8" stroke="#e0202a" stroke-width="2"></path></svg>
<svg style="left:673px;top:146px" width="16" height="16" viewBox="0 0 16 16"><path d="M1 9 L7 6 L15 8 L9 12 Z" fill="#f5c02a" stroke="#b8800c" stroke-width=".6"></path><path d="M3 5.6 L8 3.4 L14 5 L9 8 Z" fill="#f8d04a" stroke="#b8800c" stroke-width=".6"></path><path d="M1 9 V12 L9 15.4 V12 Z" fill="#d89a14"></path><path d="M9 12 V15.4 L15 11 V8 Z" fill="#e8a81a"></path><path d="M7 1 L12 0.6 L13 4 L8 5 Z" fill="#f8d86a" stroke="#b8800c" stroke-width=".5"></path></svg>
<svg style="left:674px;top:168px" width="12" height="15" viewBox="0 0 12 15"><rect x="0.6" y="0.6" width="10.8" height="13.8" rx="1.5" fill="#fbfcff" stroke="#5a6ac8" stroke-width="1"></rect><rect x="2.4" y="2.4" width="7.2" height="2" fill="#b4c0ec"></rect><rect x="2" y="9" width="8" height="3.4" fill="#9aa8e0"></rect></svg>
<svg style="left:674px;top:190px" width="12" height="15" viewBox="0 0 12 15"><rect x="0.6" y="0.6" width="10.8" height="13.8" rx="1.5" fill="#fbfcff" stroke="#5a6ac8" stroke-width="1"></rect><rect x="2.4" y="2.4" width="7.2" height="2" fill="#b4c0ec"></rect><rect x="2" y="9" width="8" height="3.4" fill="#9aa8e0"></rect></svg>
<svg style="left:674px;top:212px" width="12" height="15" viewBox="0 0 12 15"><rect x="0.6" y="0.6" width="10.8" height="13.8" rx="1.5" fill="#fbfcff" stroke="#5a6ac8" stroke-width="1"></rect><rect x="2.4" y="2.4" width="7.2" height="2" fill="#b4c0ec"></rect><rect x="2" y="9" width="8" height="3.4" fill="#9aa8e0"></rect></svg>
<svg style="left:674px;top:234px" width="12" height="15" viewBox="0 0 12 15"><rect x="0.6" y="0.6" width="10.8" height="13.8" rx="1.5" fill="#fbfcff" stroke="#5a6ac8" stroke-width="1"></rect><rect x="2.4" y="2.4" width="7.2" height="2" fill="#b4c0ec"></rect><rect x="2" y="9" width="8" height="3.4" fill="#9aa8e0"></rect></svg>
<svg style="left:673px;top:257px" width="14" height="14" viewBox="0 0 14 14"><path d="M3.6 0.6 H6.2 L5.6 13.4 H0.4 Z M7.8 0.6 H10.4 L13.6 13.4 H8.4 Z" fill="#111"></path><path d="M7 1 V3.4 M7 5.4 V8 M7 10 V13" stroke="#111" stroke-width="1"></path></svg>
<svg style="left:673px;top:278.5px" width="15" height="16" viewBox="0 0 15 16"><rect x="0.7" y="0.7" width="12" height="14" rx="1.4" fill="#fbfcff" stroke="#5a6ac8" stroke-width="1"></rect><path d="M3.4 3.4 V10.4 H6.4" fill="none" stroke="#3a4a9a" stroke-width="1.1"></path><circle cx="10.6" cy="11.6" r="2.6" fill="#e8ecf8" stroke="#4a5a9a" stroke-width="1.4" stroke-dasharray="1.4 .9"></circle><circle cx="10.6" cy="11.6" r=".9" fill="#4a5a9a"></circle></svg>
<svg style="left:673px;top:300px" width="15" height="16" viewBox="0 0 15 16"><rect x="0.7" y="2.2" width="10.6" height="13.2" rx="1" fill="#fbfcff" stroke="#5a6ac8" stroke-width="1"></rect><rect x="2.4" y="4" width="5.6" height="2.6" fill="#f5a535"></rect><path d="M2.6 8.6 H9.4 M2.6 10.6 H9.4 M2.6 12.6 H9.4" stroke="#5a68b0" stroke-width="1"></path><path d="M11.6 0.2 V6.2 M8.6 3.2 H14.6" stroke="#3a7ae0" stroke-width="2.2"></path></svg>
<div class="rr" style="left:17px;top:139.5px;width:146.5px;height:29px;border-radius:6px"></div>
<div class="badge" style="left:157.5px;top:138.5px">1</div>
<div class="rr" style="left:359px;top:256.5px;width:308px;height:21.5px;border-radius:5px"></div>
<div class="badge" style="left:347px;top:240.5px">2</div>
<div class="rr" style="left:630.5px;top:81.5px;width:41px;height:40.5px;border-radius:6px"></div>
<div class="badge" style="left:641.5px;top:112px">3</div>
<div class="rr" style="left:665px;top:208px;width:245px;height:25px"></div>
</body></html>
